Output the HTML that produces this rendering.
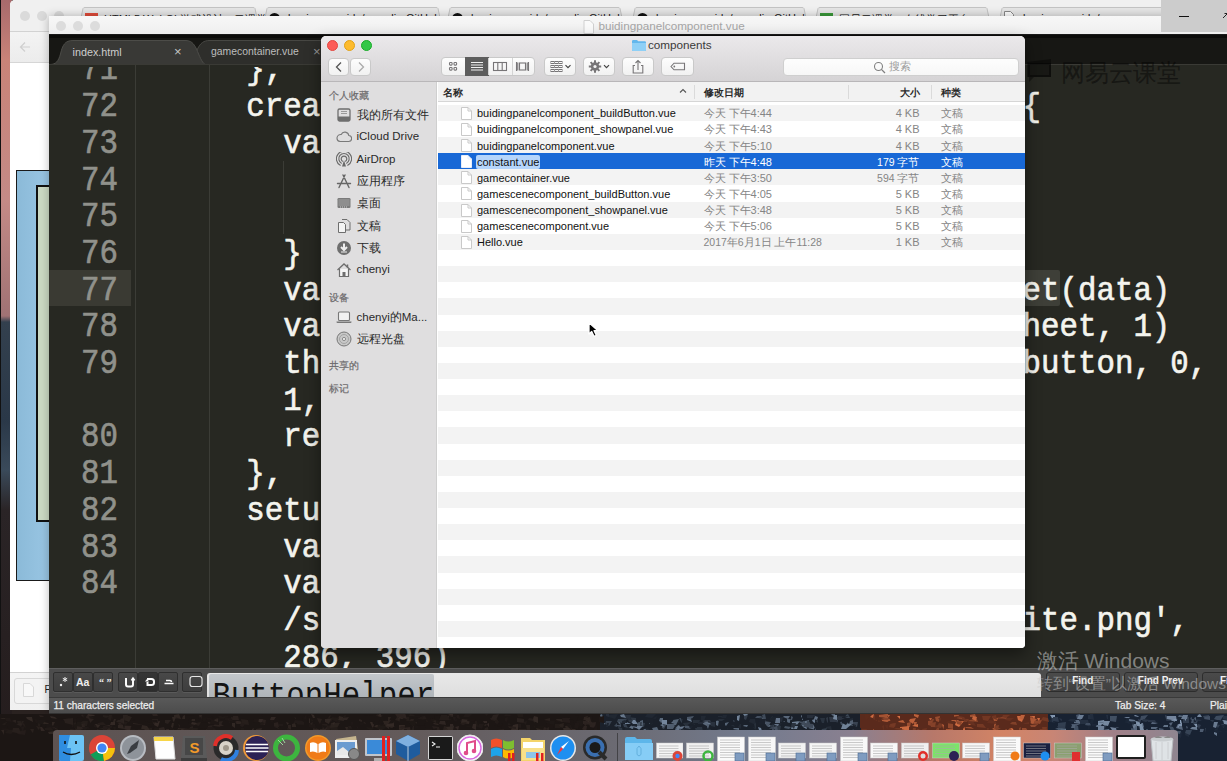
<!DOCTYPE html>
<html><head><meta charset="utf-8">
<style>
*{box-sizing:border-box}
html,body{margin:0;padding:0;width:1227px;height:761px;overflow:hidden;background:#2a2220;font-family:"Liberation Sans",sans-serif}
.a{position:absolute}
.mono{font-family:"Liberation Mono",monospace;white-space:pre}
/* desktop */
#desk-left{left:0;top:0;width:12px;height:761px;background:linear-gradient(90deg,#111 0,#111 1px,transparent 1px),linear-gradient(#a86a6c 0px,#c98378 60px,#c48a86 200px,#a07274 316px,#33404e 322px,#2a3848 420px,#3a4a5a 470px,#2a2426 510px,#241c1c 761px)}
#desk-bot{left:0;top:709px;width:1227px;height:52px;background:linear-gradient(90deg,#2a201c 0,#2e2420 400px,#3a3a48 600px,#505870 800px,#b0583a 900px,#c06040 1020px,#405070 1080px,#2a3a50 1227px)}
/* browser */
#browser{left:10px;top:0;width:1217px;height:710px;background:#fff;border-radius:5px 0 0 0;overflow:hidden}
#br-top{left:0;top:0;width:1217px;height:31.5px;background:#f0f0f0;border-bottom:1px solid #d2d2d2}
#br-tool{left:0;top:31.5px;width:1217px;height:31.5px;background:linear-gradient(#f3f3f3,#ececec);border-bottom:1px solid #d6d6d6}
/* sublime */
#subl{left:49px;top:16px;width:1178px;height:698px;background:#272822;overflow:hidden;box-shadow:0 0 9px rgba(0,0,0,.28)}
#subl-title{left:0;top:0;width:1178px;height:19px;background:linear-gradient(#f7f7f7,#efefef);border-bottom:1px solid #1a1a1a}
#subl-tabs{left:0;top:19px;width:1178px;height:29px;background:#171714}
.ln{-webkit-text-stroke:0.6px #90918b;color:#90918b;font-size:30.8px;line-height:36.7px;transform:scaleY(1.13);transform-origin:50% 50%}
.code{-webkit-text-stroke:0.6px #f4f4ee;color:#f4f4ee;font-size:30.8px;line-height:36.7px;transform:scaleY(1.05);transform-origin:50% 50%}
/* finder */
#finder{left:321px;top:36px;width:704px;height:612px;border-radius:5px 5px 4px 4px;overflow:hidden;background:#fff;box-shadow:0 6px 16px rgba(0,0,0,.45)}
#f-tool{left:0;top:0;width:704px;height:46px;background:linear-gradient(#ebe9eb,#d5d3d5);border-bottom:1px solid #b9b7b9}
#f-side{left:0;top:46px;width:116px;height:566px;background:#dfdedf;border-right:1px solid #cfcfcf}
.tl{width:11px;height:11px;border-radius:50%}
.fbtn{background:linear-gradient(#fdfdfd,#f1f1f1);border:1px solid #c9c9c9;border-radius:4px}
.side-h{font-size:10px;color:#6c6a6c;-webkit-text-stroke:.2px #6c6a6c}
.side-i{font-size:11.5px;color:#2a2a2a}
.row{left:117px;width:587px;height:16.2px}
.fname{font-size:11px;line-height:13px;color:#1a1a1a;white-space:pre}
.fdate{font-size:11px;line-height:13px;color:#858585;white-space:pre}
/* dock */
#dock{left:53px;top:730px;width:1125px;height:31px;background:rgba(120,110,110,.75);border-radius:4px 4px 0 0}
.di{top:734px;width:27px;height:27px;border-radius:5px}
</style></head><body>
<div id="desk-left" class="a"></div>

<!-- BROWSER -->
<div id="browser" class="a">
  <div id="br-top" class="a"></div>
  <svg class="a" style="left:68px;top:7px" width="182" height="25" viewBox="0 0 182 25"><path d="M0 25L5 1.5Q5.5 .5 7 .5H175Q176.5 .5 177 1.5L182 25" fill="#e6e6e6" stroke="#c4c4c4" stroke-width="1"/></svg>
  <div class="a" style="left:75px;top:13px;width:13px;height:10px;background:#e04b3a"></div>
  <div class="a" style="left:94px;top:11.5px;font-size:11px;color:#222;white-space:pre">HTML5 WebGL游戏设计 - 云课堂</div>
  <svg class="a" style="left:252px;top:7px" width="181" height="25" viewBox="0 0 181 25"><path d="M0 25L5 1.5Q5.5 .5 7 .5H174Q175.5 .5 176 1.5L181 25" fill="#e6e6e6" stroke="#c4c4c4" stroke-width="1"/></svg>
  <div class="a" style="left:259px;top:13px;width:11px;height:11px;border-radius:50%;background:#111"></div>
  <div class="a" style="left:278px;top:11.5px;font-size:11px;color:#222;white-space:pre">beginner-guide/vue-cli - GitHub</div>
  <svg class="a" style="left:435px;top:7px" width="180" height="25" viewBox="0 0 180 25"><path d="M0 25L5 1.5Q5.5 .5 7 .5H173Q174.5 .5 175 1.5L180 25" fill="#e6e6e6" stroke="#c4c4c4" stroke-width="1"/></svg>
  <div class="a" style="left:442px;top:13px;width:11px;height:11px;border-radius:50%;background:#111"></div>
  <div class="a" style="left:461px;top:11.5px;font-size:11px;color:#222;white-space:pre">beginner-guide/vue-cli - GitHub</div>
  <svg class="a" style="left:620px;top:7px" width="179" height="25" viewBox="0 0 179 25"><path d="M0 25L5 1.5Q5.5 .5 7 .5H172Q173.5 .5 174 1.5L179 25" fill="#e6e6e6" stroke="#c4c4c4" stroke-width="1"/></svg>
  <div class="a" style="left:627px;top:13px;width:11px;height:11px;border-radius:50%;background:#111"></div>
  <div class="a" style="left:646px;top:11.5px;font-size:11px;color:#222;white-space:pre">beginner-guide/vue-cli - GitHub</div>
  <svg class="a" style="left:803px;top:7px" width="179" height="25" viewBox="0 0 179 25"><path d="M0 25L5 1.5Q5.5 .5 7 .5H172Q173.5 .5 174 1.5L179 25" fill="#e6e6e6" stroke="#c4c4c4" stroke-width="1"/></svg>
  <div class="a" style="left:810px;top:13px;width:13px;height:10px;background:#3a9a3a"></div>
  <div class="a" style="left:829px;top:11.5px;font-size:11px;color:#222;white-space:pre">网易云课堂 - 在线学习平台</div>
  <svg class="a" style="left:987px;top:7px" width="180" height="25" viewBox="0 0 180 25"><path d="M0 25L5 1.5Q5.5 .5 7 .5H173Q174.5 .5 175 1.5L180 25" fill="#e6e6e6" stroke="#c4c4c4" stroke-width="1"/></svg>
  <svg class="a" style="left:994px;top:11px" width="10" height="12"><path d="M.5 .5h6l3 3v8h-9z" fill="#fff" stroke="#888"/></svg>
  <div class="a" style="left:1013px;top:11.5px;font-size:11px;color:#222;white-space:pre">beginner-guide/vue</div>
  <div class="a tl" style="left:10px;top:11px;width:10px;height:10px;background:#dadada"></div>
  <div class="a tl" style="left:27px;top:11px;width:10px;height:10px;background:#dadada"></div>
  <div class="a tl" style="left:44px;top:11px;width:10px;height:10px;background:#dadada"></div>
  <div id="br-tool" class="a"></div>
  <svg class="a" style="left:8px;top:40px" width="40" height="14" viewBox="0 0 40 14"><path d="M12 7H3M7 2.5L2.5 7L7 11.5" fill="none" stroke="#cfcfcf" stroke-width="1.2"/><path d="M33 7h9" stroke="#d6d6d6" stroke-width="1.2"/></svg>
  <div class="a" style="left:6px;top:170px;width:40px;height:411px;background:linear-gradient(90deg,#8bbad8,#9cc8e6);border:1px solid #1a1a1a"></div>
  <div class="a" style="left:26px;top:185px;width:20px;height:337px;background:#cbd9c3;border:2px solid #111"></div>
  <div class="a" style="left:0;top:672px;width:1217px;height:38px;background:linear-gradient(#f4f4f4,#f0f0f0);border-top:1.5px solid #d2d2d2"></div>
  <div class="a" style="left:4px;top:677.5px;width:200px;height:26px;border:1px solid #d8d8d8;border-radius:3px;background:#f3f3f3"></div>
  <svg class="a" style="left:13px;top:683px" width="11" height="14" viewBox="0 0 11 14"><path d="M.5 .5h6.5l3.5 3.5v9.5h-10z" fill="#f8f8f8" stroke="#d8d8d8"/></svg>
  <div class="a" style="left:34.5px;top:684px;font-size:10px;color:#222">F</div>
</div>

<!-- SUBLIME -->
<div id="subl" class="a">
  <div id="subl-title" class="a">
    <div class="a tl" style="left:7px;top:5px;width:10px;height:10px;background:#dcdcdc"></div>
    <div class="a tl" style="left:24px;top:5px;width:10px;height:10px;background:#dcdcdc"></div>
    <div class="a tl" style="left:41px;top:5px;width:10px;height:10px;background:#dcdcdc"></div>
    <svg class="a" style="left:534px;top:3.5px" width="11" height="14" viewBox="0 0 11 14"><path d="M1 .5h6l3.5 3.5v9.5h-9.5z" fill="#fafafa" stroke="#d0d0d0"/></svg>
    <div class="a" style="left:549.5px;top:3.2px;font-size:11.7px;color:#a6a6a6;white-space:pre">buidingpanelcomponent.vue</div>
  </div>
  <div id="subl-tabs" class="a">
    <div class="a" style="left:0;top:0;width:1178px;height:2.5px;background:#0c0c0a"></div>
    <svg class="a" style="left:0;top:0" width="300" height="30" viewBox="0 0 300 30">
      <path d="M139 29.5C142.5 27 145.5 21 148.5 14C151.5 8 154.5 5.5 161 5.5L300 5.5L300 29.5Z" fill="#2e2e2b" stroke="#474743" stroke-width="1"/>
      <path d="M1 29.5C7 29.5 9.5 26 11.5 19C13.5 10 16 5.5 24 5.5L136 5.5C142 5.5 144.5 8 147.5 14C150.5 21 152.5 27 156 29.5Z" fill="#393936" stroke="#4c4c48" stroke-width="1"/>
    </svg>
    <div class="a" style="left:23.5px;top:10.5px;font-size:10.8px;color:#cdcdcd;white-space:pre">index.html</div>
    <div class="a" style="left:125px;top:8.5px;font-size:13px;color:#c4c4c4">&#215;</div>
    <div class="a" style="left:162px;top:10.5px;font-size:10.4px;color:#bdbdbd;white-space:pre">gamecontainer.vue</div>
    <div class="a" style="left:264px;top:8.5px;font-size:13px;color:#9a9a9a">&#215;</div>
  </div>
  <div class="a" style="left:0;top:48px;width:1178px;height:1px;background:#3a3a35"></div>
  <div class="a" style="left:0;top:253.8px;width:82px;height:36.7px;background:#3a3a33"></div>
  <div class="a" style="left:86px;top:49px;width:1px;height:603px;background:#3b3c36"></div>
  <div class="a" style="left:160px;top:49px;width:1px;height:603px;background:#3b3c36"></div>
  <div class="a" style="left:234px;top:145px;width:1px;height:73px;background:#3b3c36"></div>
  <div class="a" style="left:973.5px;top:253.8px;width:37px;height:36.7px;background:#3e3f38;border-radius:2px"></div>
<div class="a" style="left:0;top:50.5px;width:1178px;height:601.5px;overflow:hidden"><div class="a" style="left:0;top:-50.5px;width:1178px;height:652px">
<div class="a mono ln" style="left:32px;top:36.3px">71</div>
<div class="a mono ln" style="left:32px;top:73.0px">72</div>
<div class="a mono ln" style="left:32px;top:109.8px">73</div>
<div class="a mono ln" style="left:32px;top:146.5px">74</div>
<div class="a mono ln" style="left:32px;top:183.2px">75</div>
<div class="a mono ln" style="left:32px;top:219.9px">76</div>
<div class="a mono ln" style="left:32px;top:256.5px">77</div>
<div class="a mono ln" style="left:32px;top:293.3px">78</div>
<div class="a mono ln" style="left:32px;top:329.9px">79</div>
<div class="a mono ln" style="left:32px;top:403.3px">80</div>
<div class="a mono ln" style="left:32px;top:440.0px">81</div>
<div class="a mono ln" style="left:32px;top:476.8px">82</div>
<div class="a mono ln" style="left:32px;top:513.5px">83</div>
<div class="a mono ln" style="left:32px;top:550.2px">84</div>
<div class="a mono code" style="left:197.3px;top:37.3px">},</div>
<div class="a mono code" style="left:197.3px;top:74.0px">created: function</div>
<div class="a mono code" style="left:234.3px;top:110.8px">var this_ = th</div>
<div class="a mono code" style="left:234.3px;top:220.9px">}</div>
<div class="a mono code" style="left:234.3px;top:257.5px">var sheet = fr</div>
<div class="a mono code" style="left:234.3px;top:294.3px">var wid = she</div>
<div class="a mono code" style="left:234.3px;top:330.9px">this.button =</div>
<div class="a mono code" style="left:234.3px;top:367.6px">1, ta</div>
<div class="a mono code" style="left:234.3px;top:404.3px">return this</div>
<div class="a mono code" style="left:197.3px;top:441.0px">},</div>
<div class="a mono code" style="left:197.3px;top:477.8px">setup: func</div>
<div class="a mono code" style="left:234.3px;top:514.5px">var this_ =</div>
<div class="a mono code" style="left:234.3px;top:551.2px">var data =</div>
<div class="a mono code" style="left:234.3px;top:587.9px">/static/sp</div>
<div class="a mono code" style="left:234.3px;top:624.6px">286, 396)</div>
<div class="a mono code" style="left:973.5px;top:74.0px">{</div>
<div class="a mono code" style="left:973.5px;top:257.5px">et(data)</div>
<div class="a mono code" style="left:973.5px;top:294.3px">heet, 1)</div>
<div class="a mono code" style="left:973.5px;top:330.9px">button, 0,</div>
<div class="a mono code" style="left:973.5px;top:587.9px">ite.png',</div>
</div></div>
  <!-- find panel -->
<div class="a" style="left:0;top:651.5px;width:1178px;height:29.5px;background:#4c4c4c;border-top:1px solid #5e5e5e">
<div class="a" style="left:4px;top:3.5px;width:20px;height:19.5px;background:linear-gradient(#484848,#3e3e3e);border:1px solid #2f2f2f;border-radius:2px;box-shadow:0 1px 0 #5a5a5a"></div>
<div class="a" style="left:24px;top:3.5px;width:20px;height:19.5px;background:linear-gradient(#484848,#3e3e3e);border:1px solid #2f2f2f;border-radius:2px;box-shadow:0 1px 0 #5a5a5a"></div>
<div class="a" style="left:44px;top:3.5px;width:20px;height:19.5px;background:linear-gradient(#484848,#3e3e3e);border:1px solid #2f2f2f;border-radius:2px;box-shadow:0 1px 0 #5a5a5a"></div>
<div class="a" style="left:69px;top:3.5px;width:20px;height:19.5px;background:linear-gradient(#484848,#3e3e3e);border:1px solid #2f2f2f;border-radius:2px;box-shadow:0 1px 0 #5a5a5a"></div>
<div class="a" style="left:89px;top:3.5px;width:20px;height:19.5px;background:linear-gradient(#353535,#2c2c2c);border:1px solid #2f2f2f;border-radius:2px;box-shadow:0 1px 0 #5a5a5a"></div>
<div class="a" style="left:109px;top:3.5px;width:20px;height:19.5px;background:linear-gradient(#484848,#3e3e3e);border:1px solid #2f2f2f;border-radius:2px;box-shadow:0 1px 0 #5a5a5a"></div>
<div class="a" style="left:133px;top:3.5px;width:20px;height:19.5px;background:linear-gradient(#484848,#3e3e3e);border:1px solid #2f2f2f;border-radius:2px;box-shadow:0 1px 0 #5a5a5a"></div>

<svg class="a" style="left:4px;top:3.5px" width="150" height="19" viewBox="0 0 150 19">
<circle cx="8" cy="13" r="1.2" fill="#eee"/><path d="M12 5v5M9.8 6.3l4.4 2.4M14.2 6.3l-4.4 2.4" stroke="#eee" stroke-width="1"/>
<text x="23" y="14" font-family="Liberation Sans" font-size="10.5" font-weight="bold" fill="#eee">Aa</text>
<text x="46" y="14" font-family="Liberation Serif" font-size="10" font-weight="bold" fill="#eee">“ ”</text>
<path d="M73 6v6.5q0 2 2 2h3q2 0 2-2V7.5M78.5 8.5l1.5-2l1.5 2" fill="none" stroke="#fafafa" stroke-width="2"/>
<path d="M94 7h4.5q2.5 0 2.5 2.5v1q0 2.5-2.5 2.5h-4v-3" fill="none" stroke="#fafafa" stroke-width="2"/><path d="M92 9.5l2-2.5l2 2.5z" fill="#fafafa"/>
<path d="M113 8.5h4q1.5 0 1.5 1.5v0M111.5 11.5h9" fill="none" stroke="#fafafa" stroke-width="1.6"/>
<rect x="137" y="4.5" width="12" height="10" rx="2.5" fill="none" stroke="#e6e6e6" stroke-width="1.2"/>
</svg>
<div class="a" style="left:158.4px;top:4px;width:834px;height:25px;background:linear-gradient(#e8e8e8,#dedede);border-radius:3px 3px 0 0;overflow:hidden"><div class="a" style="left:2px;top:1.5px;width:225px;height:30px;background:linear-gradient(#c3c7cb,#a9afb4);border-radius:2px"></div><div class="a mono" style="left:5px;top:4px;font-size:30.8px;line-height:36.7px;color:#141414;transform:scaleY(1.12);transform-origin:0 0">ButtonHelper</div></div>
<div class="a" style="left:997px;top:3.5px;width:73.5px;height:19.5px;background:linear-gradient(#4a4a4a,#404040);border:1px solid #2d2d2d;border-radius:3px"></div>
<div class="a" style="left:1074.6px;top:3.5px;width:74px;height:19.5px;background:linear-gradient(#4a4a4a,#404040);border:1px solid #2d2d2d;border-radius:3px"></div>
<div class="a" style="left:1152.6px;top:3.5px;width:74px;height:19.5px;background:linear-gradient(#4a4a4a,#404040);border:1px solid #2d2d2d;border-radius:3px"></div>
<div class="a" style="left:997px;top:6.5px;width:73.5px;text-align:center;font-size:10px;font-weight:bold;color:#f2f2f2">Find</div>
<div class="a" style="left:1074.6px;top:6.5px;width:74px;text-align:center;font-size:10px;font-weight:bold;color:#f2f2f2">Find Prev</div>
<div class="a" style="left:1171px;top:6.5px;font-size:10px;font-weight:bold;color:#f2f2f2;white-space:nowrap">Find All</div>
</div>
<div class="a" style="left:0;top:681px;width:1178px;height:16.5px;background:linear-gradient(#595959,#4c4c4c);border-top:1px solid #3a3a3a;border-bottom:1px solid #333"></div>
<div class="a" style="left:4.4px;top:683.5px;font-size:10.1px;color:#ededed;white-space:pre;-webkit-text-stroke:.25px #ededed">11 characters selected</div>
<div class="a" style="left:1066px;top:683.5px;font-size:10.2px;color:#ededed;white-space:pre;-webkit-text-stroke:.25px #ededed">Tab Size: 4</div>
<div class="a" style="left:1161px;top:683.5px;font-size:10.2px;color:#ededed;white-space:pre;-webkit-text-stroke:.25px #ededed">Plain</div>
</div>

<!-- TOPRIGHT -->
<div class="a" style="left:1161px;top:0;width:66px;height:32px;background:#cccccc"></div>
<div class="a" style="left:1179px;top:15.5px;width:10px;height:1.5px;background:#111"></div>
<svg class="a" style="left:1222px;top:11px" width="6" height="8" viewBox="0 0 6 8"><path d="M1 7L5 3M2.5 2.5H5.5V5.5" fill="none" stroke="#222" stroke-width="1"/></svg>

<!-- FINDER -->
<div id="finder" class="a">
  <div id="f-tool" class="a">
    <div class="a tl" style="left:6px;top:4px;background:#fc5b57;border:.5px solid #e2463f"></div>
    <div class="a tl" style="left:23px;top:4px;background:#fdbb2d;border:.5px solid #e1a116"></div>
    <div class="a tl" style="left:40px;top:4px;background:#33c748;border:.5px solid #1aab29"></div>
    <svg class="a" style="left:311px;top:4px" width="14" height="11" viewBox="0 0 14 11"><path d="M0 1.2Q0 0 1.2 0h3.8l1.2 1.3h6.6Q14 1.3 14 2.5V10Q14 11 13 11H1Q0 11 0 10z" fill="#63b7ec"/><path d="M0 3h14v7Q14 11 13 11H1Q0 11 0 10z" fill="#8fd0f6"/></svg>
    <div class="a" style="left:327px;top:1.5px;font-size:11.7px;color:#3a3a3a;white-space:pre">components</div>
    <div class="a fbtn" style="left:7px;top:21.5px;width:21px;height:18.5px"></div>
    <div class="a fbtn" style="left:29px;top:21.5px;width:21px;height:18.5px"></div>
    <svg class="a" style="left:13px;top:25px" width="10" height="12" viewBox="0 0 10 12"><path d="M7 1.5L2.5 6L7 10.5" fill="none" stroke="#555" stroke-width="1.3"/></svg>
    <svg class="a" style="left:35px;top:25px" width="10" height="12" viewBox="0 0 10 12"><path d="M3 1.5L7.5 6L3 10.5" fill="none" stroke="#aaa" stroke-width="1.3"/></svg>
    <div class="a fbtn" style="left:120px;top:21px;width:94px;height:19px"></div>
    <div class="a" style="left:144px;top:21px;width:24px;height:19px;background:#5d5d5d"></div>
    <div class="a" style="left:167px;top:22px;width:1px;height:17px;background:#d4d4d4"></div>
    <div class="a" style="left:190.5px;top:22px;width:1px;height:17px;background:#d4d4d4"></div>
    <svg class="a" style="left:120px;top:21px" width="94" height="19" viewBox="0 0 94 19">
      <g fill="none" stroke="#777577" stroke-width="1.1"><rect x="8.5" y="5.5" width="2.6" height="2.6" rx=".8"/><rect x="13" y="5.5" width="2.6" height="2.6" rx=".8"/><rect x="8.5" y="10.5" width="2.6" height="2.6" rx=".8"/><rect x="13" y="10.5" width="2.6" height="2.6" rx=".8"/></g>
      <g stroke="#f0f0f0" stroke-width="1.2"><path d="M30 5.5h12M30 8h12M30 10.5h12M30 13h12"/></g>
      <g fill="none" stroke="#777577" stroke-width="1.1"><rect x="52.5" y="5.5" width="13" height="8"/><path d="M56.8 5.5v8M61.2 5.5v8"/></g>
      <g fill="none" stroke="#777577" stroke-width="1.1"><rect x="78.5" y="6" width="6" height="7"/><path d="M75.5 5v9M76.8 5.5v8M87.5 5v9M86.2 5.5v8"/></g>
    </svg>
    <div class="a fbtn" style="left:222.5px;top:21px;width:32.5px;height:19px"></div>
    <svg class="a" style="left:222.5px;top:21px" width="33" height="19" viewBox="0 0 33 19"><g fill="none" stroke="#777577" stroke-width="1"><rect x="7" y="4.5" width="3" height="2"/><rect x="11" y="4.5" width="3" height="2"/><rect x="15" y="4.5" width="3" height="2"/><rect x="7" y="8.5" width="3" height="2"/><rect x="11" y="8.5" width="3" height="2"/><rect x="15" y="8.5" width="3" height="2"/><rect x="7" y="12.5" width="3" height="2"/><rect x="11" y="12.5" width="3" height="2"/><rect x="15" y="12.5" width="3" height="2"/></g><path d="M21.5 8.2l2.5 2.5l2.5-2.5" fill="none" stroke="#444" stroke-width="1.2"/></svg>
    <div class="a fbtn" style="left:262px;top:21px;width:32px;height:19px"></div>
    <svg class="a" style="left:262px;top:21px" width="32" height="19" viewBox="0 0 32 19"><g transform="translate(12,9.5)"><circle r="4.2" fill="#777577"/><g stroke="#777577" stroke-width="2"><path d="M0-6.2v12.4M-6.2 0h12.4M-4.4-4.4l8.8 8.8M4.4-4.4l-8.8 8.8"/></g><circle r="1.6" fill="#f3f3f3"/></g><path d="M21 8.2l2.5 2.5l2.5-2.5" fill="none" stroke="#444" stroke-width="1.2"/></svg>
    <div class="a fbtn" style="left:301px;top:21px;width:32px;height:19px"></div>
    <svg class="a" style="left:301px;top:21px" width="32" height="19" viewBox="0 0 32 19"><g fill="none" stroke="#777577" stroke-width="1.1"><path d="M13 8.5h-1.8v7.5h9.6v-7.5H19"/><path d="M16 13V3.5M13.5 6l2.5-2.5l2.5 2.5"/></g></svg>
    <div class="a fbtn" style="left:340px;top:21px;width:32.5px;height:19px"></div>
    <svg class="a" style="left:340px;top:21px" width="33" height="19" viewBox="0 0 33 19"><path d="M10 9.5l3-3.3h10.5v6.6H13z" fill="none" stroke="#777577" stroke-width="1.1"/><circle cx="13.3" cy="9.5" r=".9" fill="#777577"/></svg>
    <div class="a" style="left:462px;top:21.5px;width:235.5px;height:18.5px;background:linear-gradient(#fdfdfd,#f7f7f7);border:1px solid #cfcfcf;border-radius:4px"></div>
    <svg class="a" style="left:552px;top:24.5px" width="13" height="13" viewBox="0 0 13 13"><circle cx="5.5" cy="5.5" r="4" fill="none" stroke="#808080" stroke-width="1.1"/><path d="M8.4 8.4L12 12" stroke="#808080" stroke-width="1.3"/></svg>
    <div class="a" style="left:568px;top:24px;font-size:10.8px;color:#9c9c9c;white-space:pre">搜索</div>
  </div>
  <div id="f-side" class="a">
    <div class="a side-h" style="left:7.5px;top:7px">个人收藏</div>
    <svg class="a" style="left:15px;top:25.0px" width="16" height="16" viewBox="0 0 16 16"><rect x="2" y="2" width="12" height="12" rx="1.5" fill="none" stroke="#6e6e6e" stroke-width="1.3"/><path d="M2 9.5h12v3.5q0 1-1 1H3q-1 0-1-1z" fill="#6e6e6e"/><path d="M5 4.5h6M5 6.5h6" stroke="#9a9a9a"/></svg>
<div class="a side-i" style="left:35.5px;top:26.0px">我的所有文件</div>
<svg class="a" style="left:15px;top:47.0px" width="16" height="16" viewBox="0 0 16 16"><path d="M4 12.5h8.5a3 3 0 0 0 .3-6a4 4 0 0 0-7.6-1a3.5 3.5 0 0 0-1.2 7z" fill="none" stroke="#7a7a7a" stroke-width="1.1"/></svg>
<div class="a side-i" style="left:35.5px;top:48.0px">iCloud Drive</div>
<svg class="a" style="left:15px;top:69.6px" width="16" height="16" viewBox="0 0 16 16"><g fill="none" stroke="#6a6a6a" stroke-width="1.15"><path d="M4.6 13.6A7.6 7.6 0 1 1 11.4 13.6"/><path d="M5.7 11.4A5.2 5.2 0 1 1 10.3 11.4"/><path d="M6.8 9.4A2.8 2.8 0 1 1 9.2 9.4"/></g><path d="M8 8.2L10 14.5H6z" fill="#6a6a6a"/></svg>
<div class="a side-i" style="left:35.5px;top:70.6px">AirDrop</div>
<svg class="a" style="left:15px;top:91.3px" width="16" height="16" viewBox="0 0 16 16"><g stroke="#666" stroke-width="1.4" fill="none" stroke-linecap="round"><path d="M9 2L3 14.5M7 2l6 12.5M1.5 10.5h13"/></g></svg>
<div class="a side-i" style="left:35.5px;top:92.3px">应用程序</div>
<svg class="a" style="left:15px;top:113.3px" width="16" height="16" viewBox="0 0 16 16"><rect x="1.5" y="3" width="13" height="10" rx="1.3" fill="#7a7a7a"/><rect x="2.5" y="4" width="11" height="7" fill="#8e8e8e"/><path d="M4 12h8" stroke="#ccc" stroke-dasharray="1 1"/></svg>
<div class="a side-i" style="left:35.5px;top:114.3px">桌面</div>
<svg class="a" style="left:15px;top:136.0px" width="16" height="16" viewBox="0 0 16 16"><path d="M2.5 4.5h5l2 2v8h-7z" fill="#f4f4f4" stroke="#6e6e6e"/><path d="M6 1.5h5l3 3v7.5h-4.5" fill="none" stroke="#6e6e6e"/></svg>
<div class="a side-i" style="left:35.5px;top:137.0px">文稿</div>
<svg class="a" style="left:15px;top:158.0px" width="16" height="16" viewBox="0 0 16 16"><circle cx="8" cy="8" r="7" fill="#6e6e6e"/><path d="M8 3.5v6M5 7l3 3l3-3" fill="none" stroke="#eee" stroke-width="2"/><path d="M5 12h6" stroke="#eee" stroke-width="1.2"/></svg>
<div class="a side-i" style="left:35.5px;top:159.0px">下载</div>
<svg class="a" style="left:15px;top:180.0px" width="16" height="16" viewBox="0 0 16 16"><path d="M1.5 8L8 2l6.5 6" fill="none" stroke="#6e6e6e" stroke-width="1.3"/><path d="M3.5 7v7.5h9V7" fill="#f5f5f5" stroke="#6e6e6e" stroke-width="1.2"/><rect x="6.5" y="10" width="3" height="4.5" fill="#6e6e6e"/><path d="M11.5 2.5v3" stroke="#6e6e6e" stroke-width="1.5"/></svg>
<div class="a side-i" style="left:35.5px;top:181.0px">chenyi</div>
<svg class="a" style="left:15px;top:226.5px" width="16" height="16" viewBox="0 0 16 16"><rect x="2.5" y="3" width="11" height="8.5" rx="1" fill="#f1f1f1" stroke="#777" stroke-width="1.1"/><path d="M0.5 12.5h15v.5q0 1-1 1h-13q-1 0-1-1z" fill="#777"/></svg>
<div class="a side-i" style="left:35.5px;top:227.5px">chenyi的Ma...</div>
<svg class="a" style="left:15px;top:248.6px" width="16" height="16" viewBox="0 0 16 16"><circle cx="8" cy="8" r="7" fill="#c8c8c8" stroke="#777" stroke-width="1"/><circle cx="8" cy="8" r="4.5" fill="none" stroke="#9a9a9a" stroke-width=".8"/><circle cx="8" cy="8" r="1.6" fill="#eee" stroke="#777" stroke-width=".8"/></svg>
<div class="a side-i" style="left:35.5px;top:249.6px">远程光盘</div>
<div class="a side-h" style="left:7.5px;top:208.5px">设备</div>
<div class="a side-h" style="left:7.5px;top:276.5px">共享的</div>
<div class="a side-h" style="left:7.5px;top:300px">标记</div>
  </div>
  <div class="a" style="left:117px;top:46px;width:587px;height:20px;background:#f2f2f2;border-bottom:1px solid #d6d6d6"></div>
  <div class="a" style="left:122px;top:50px;font-size:10px;color:#2a2a2a;font-weight:bold">名称</div>
  <svg class="a" style="left:358px;top:52px" width="8" height="6" viewBox="0 0 8 6"><path d="M1 4.5l3-3l3 3" fill="none" stroke="#555" stroke-width="1.1"/></svg>
  <div class="a" style="left:372.5px;top:49px;width:1px;height:14px;background:#dadada"></div>
  <div class="a" style="left:382.5px;top:50px;font-size:10px;color:#2a2a2a;font-weight:bold">修改日期</div>
  <div class="a" style="left:527px;top:49px;width:1px;height:14px;background:#dadada"></div>
  <div class="a" style="left:560px;width:38.5px;text-align:right;top:50px;font-size:10px;color:#2a2a2a;font-weight:bold">大小</div>
  <div class="a" style="left:609.8px;top:49px;width:1px;height:14px;background:#dadada"></div>
  <div class="a" style="left:619.6px;top:50px;font-size:10px;color:#2a2a2a;font-weight:bold">种类</div>
<div class="a" style="left:117px;top:68.8px;width:587px;height:16.4px;background:#f3f3f3"></div>
<div class="a" style="left:117px;top:84.9px;width:587px;height:16.4px;background:#ffffff"></div>
<div class="a" style="left:117px;top:101.1px;width:587px;height:16.4px;background:#f3f3f3"></div>
<div class="a" style="left:117px;top:117.2px;width:587px;height:16.4px;background:#1868d6"></div>
<div class="a" style="left:117px;top:133.3px;width:587px;height:16.4px;background:#f3f3f3"></div>
<div class="a" style="left:117px;top:149.4px;width:587px;height:16.4px;background:#ffffff"></div>
<div class="a" style="left:117px;top:165.6px;width:587px;height:16.4px;background:#f3f3f3"></div>
<div class="a" style="left:117px;top:181.7px;width:587px;height:16.4px;background:#ffffff"></div>
<div class="a" style="left:117px;top:197.8px;width:587px;height:16.4px;background:#f3f3f3"></div>
<div class="a" style="left:117px;top:214.0px;width:587px;height:16.4px;background:#ffffff"></div>
<div class="a" style="left:117px;top:230.1px;width:587px;height:16.4px;background:#f3f3f3"></div>
<div class="a" style="left:117px;top:246.2px;width:587px;height:16.4px;background:#ffffff"></div>
<div class="a" style="left:117px;top:262.4px;width:587px;height:16.4px;background:#f3f3f3"></div>
<div class="a" style="left:117px;top:278.5px;width:587px;height:16.4px;background:#ffffff"></div>
<div class="a" style="left:117px;top:294.6px;width:587px;height:16.4px;background:#f3f3f3"></div>
<div class="a" style="left:117px;top:310.8px;width:587px;height:16.4px;background:#ffffff"></div>
<div class="a" style="left:117px;top:326.9px;width:587px;height:16.4px;background:#f3f3f3"></div>
<div class="a" style="left:117px;top:343.0px;width:587px;height:16.4px;background:#ffffff"></div>
<div class="a" style="left:117px;top:359.1px;width:587px;height:16.4px;background:#f3f3f3"></div>
<div class="a" style="left:117px;top:375.3px;width:587px;height:16.4px;background:#ffffff"></div>
<div class="a" style="left:117px;top:391.4px;width:587px;height:16.4px;background:#f3f3f3"></div>
<div class="a" style="left:117px;top:407.5px;width:587px;height:16.4px;background:#ffffff"></div>
<div class="a" style="left:117px;top:423.7px;width:587px;height:16.4px;background:#f3f3f3"></div>
<div class="a" style="left:117px;top:439.8px;width:587px;height:16.4px;background:#ffffff"></div>
<div class="a" style="left:117px;top:455.9px;width:587px;height:16.4px;background:#f3f3f3"></div>
<div class="a" style="left:117px;top:472.1px;width:587px;height:16.4px;background:#ffffff"></div>
<div class="a" style="left:117px;top:488.2px;width:587px;height:16.4px;background:#f3f3f3"></div>
<div class="a" style="left:117px;top:504.3px;width:587px;height:16.4px;background:#ffffff"></div>
<div class="a" style="left:117px;top:520.4px;width:587px;height:16.4px;background:#f3f3f3"></div>
<div class="a" style="left:117px;top:536.6px;width:587px;height:16.4px;background:#ffffff"></div>
<div class="a" style="left:117px;top:552.7px;width:587px;height:16.4px;background:#f3f3f3"></div>
<div class="a" style="left:117px;top:568.8px;width:587px;height:16.4px;background:#ffffff"></div>
<div class="a" style="left:117px;top:585.0px;width:587px;height:16.4px;background:#f3f3f3"></div>
<div class="a" style="left:117px;top:601.1px;width:587px;height:16.4px;background:#ffffff"></div>
<svg class="a" style="left:140px;top:70.8px" width="11" height="13" viewBox="0 0 11 13"><path d="M.5 .5h6.5l3.5 3.5v8.5h-10z" fill="#ffffff" stroke="#c9c9c9" stroke-width="1"/><path d="M7 .5v3.5h3.5" fill="none" stroke="#c9c9c9"/></svg>
<div class="a fname" style="left:156px;top:71.2px;color:#111">buidingpanelcomponent_buildButton.vue</div>
<div class="a fdate" style="left:382.5px;top:71.2px;color:#858585;font-size:11px">今天 下午4:44</div>
<div class="a fdate" style="left:420px;width:178.5px;text-align:right;top:71.2px;color:#858585;font-size:11px">4 KB</div>
<div class="a fdate" style="left:619.6px;top:71.2px;color:#858585">文稿</div>
<svg class="a" style="left:140px;top:86.9px" width="11" height="13" viewBox="0 0 11 13"><path d="M.5 .5h6.5l3.5 3.5v8.5h-10z" fill="#ffffff" stroke="#c9c9c9" stroke-width="1"/><path d="M7 .5v3.5h3.5" fill="none" stroke="#c9c9c9"/></svg>
<div class="a fname" style="left:156px;top:87.3px;color:#111">buidingpanelcomponent_showpanel.vue</div>
<div class="a fdate" style="left:382.5px;top:87.3px;color:#858585;font-size:11px">今天 下午4:43</div>
<div class="a fdate" style="left:420px;width:178.5px;text-align:right;top:87.3px;color:#858585;font-size:11px">4 KB</div>
<div class="a fdate" style="left:619.6px;top:87.3px;color:#858585">文稿</div>
<svg class="a" style="left:140px;top:103.1px" width="11" height="13" viewBox="0 0 11 13"><path d="M.5 .5h6.5l3.5 3.5v8.5h-10z" fill="#ffffff" stroke="#c9c9c9" stroke-width="1"/><path d="M7 .5v3.5h3.5" fill="none" stroke="#c9c9c9"/></svg>
<div class="a fname" style="left:156px;top:103.5px;color:#111">buidingpanelcomponent.vue</div>
<div class="a fdate" style="left:382.5px;top:103.5px;color:#858585;font-size:11px">今天 下午5:10</div>
<div class="a fdate" style="left:420px;width:178.5px;text-align:right;top:103.5px;color:#858585;font-size:11px">4 KB</div>
<div class="a fdate" style="left:619.6px;top:103.5px;color:#858585">文稿</div>
<svg class="a" style="left:140px;top:119.2px" width="11" height="13" viewBox="0 0 11 13"><path d="M.5 .5h6.5l3.5 3.5v8.5h-10z" fill="#ffffff" stroke="#e8eefa" stroke-width="1"/><path d="M7 .5v3.5h3.5" fill="none" stroke="#e8eefa"/></svg>
<div class="a" style="left:154.6px;top:119.0px;width:64.4px;height:13.6px;background:#b5d5fb;border-radius:2px"></div>
<div class="a fname" style="left:156px;top:119.6px;color:#111">constant.vue</div>
<div class="a fdate" style="left:382.5px;top:119.6px;color:#ffffff;font-size:11px">昨天 下午4:48</div>
<div class="a fdate" style="left:420px;width:178.5px;text-align:right;top:119.6px;color:#ffffff;font-size:10.5px">179 字节</div>
<div class="a fdate" style="left:619.6px;top:119.6px;color:#fff">文稿</div>
<svg class="a" style="left:140px;top:135.3px" width="11" height="13" viewBox="0 0 11 13"><path d="M.5 .5h6.5l3.5 3.5v8.5h-10z" fill="#ffffff" stroke="#c9c9c9" stroke-width="1"/><path d="M7 .5v3.5h3.5" fill="none" stroke="#c9c9c9"/></svg>
<div class="a fname" style="left:156px;top:135.7px;color:#111">gamecontainer.vue</div>
<div class="a fdate" style="left:382.5px;top:135.7px;color:#858585;font-size:11px">今天 下午3:50</div>
<div class="a fdate" style="left:420px;width:178.5px;text-align:right;top:135.7px;color:#858585;font-size:10.5px">594 字节</div>
<div class="a fdate" style="left:619.6px;top:135.7px;color:#858585">文稿</div>
<svg class="a" style="left:140px;top:151.4px" width="11" height="13" viewBox="0 0 11 13"><path d="M.5 .5h6.5l3.5 3.5v8.5h-10z" fill="#ffffff" stroke="#c9c9c9" stroke-width="1"/><path d="M7 .5v3.5h3.5" fill="none" stroke="#c9c9c9"/></svg>
<div class="a fname" style="left:156px;top:151.8px;color:#111">gamescenecomponent_buildButton.vue</div>
<div class="a fdate" style="left:382.5px;top:151.8px;color:#858585;font-size:11px">今天 下午4:05</div>
<div class="a fdate" style="left:420px;width:178.5px;text-align:right;top:151.8px;color:#858585;font-size:11px">5 KB</div>
<div class="a fdate" style="left:619.6px;top:151.8px;color:#858585">文稿</div>
<svg class="a" style="left:140px;top:167.6px" width="11" height="13" viewBox="0 0 11 13"><path d="M.5 .5h6.5l3.5 3.5v8.5h-10z" fill="#ffffff" stroke="#c9c9c9" stroke-width="1"/><path d="M7 .5v3.5h3.5" fill="none" stroke="#c9c9c9"/></svg>
<div class="a fname" style="left:156px;top:168.0px;color:#111">gamescenecomponent_showpanel.vue</div>
<div class="a fdate" style="left:382.5px;top:168.0px;color:#858585;font-size:11px">今天 下午3:48</div>
<div class="a fdate" style="left:420px;width:178.5px;text-align:right;top:168.0px;color:#858585;font-size:11px">5 KB</div>
<div class="a fdate" style="left:619.6px;top:168.0px;color:#858585">文稿</div>
<svg class="a" style="left:140px;top:183.7px" width="11" height="13" viewBox="0 0 11 13"><path d="M.5 .5h6.5l3.5 3.5v8.5h-10z" fill="#ffffff" stroke="#c9c9c9" stroke-width="1"/><path d="M7 .5v3.5h3.5" fill="none" stroke="#c9c9c9"/></svg>
<div class="a fname" style="left:156px;top:184.1px;color:#111">gamescenecomponent.vue</div>
<div class="a fdate" style="left:382.5px;top:184.1px;color:#858585;font-size:11px">今天 下午5:06</div>
<div class="a fdate" style="left:420px;width:178.5px;text-align:right;top:184.1px;color:#858585;font-size:11px">5 KB</div>
<div class="a fdate" style="left:619.6px;top:184.1px;color:#858585">文稿</div>
<svg class="a" style="left:140px;top:199.8px" width="11" height="13" viewBox="0 0 11 13"><path d="M.5 .5h6.5l3.5 3.5v8.5h-10z" fill="#ffffff" stroke="#c9c9c9" stroke-width="1"/><path d="M7 .5v3.5h3.5" fill="none" stroke="#c9c9c9"/></svg>
<div class="a fname" style="left:156px;top:200.2px;color:#111">Hello.vue</div>
<div class="a fdate" style="left:382.5px;top:200.2px;color:#858585;font-size:10.5px">2017年6月1日 上午11:28</div>
<div class="a fdate" style="left:420px;width:178.5px;text-align:right;top:200.2px;color:#858585;font-size:11px">1 KB</div>
<div class="a fdate" style="left:619.6px;top:200.2px;color:#858585">文稿</div>
</div>
<!-- FINDER END -->
<!-- CURSOR -->
<svg class="a" style="left:587px;top:321px" width="13" height="17" viewBox="0 0 13 17"><path d="M2 1.8v11.2l2.7-2.5l2.3 4.8l2.3-1l-2.2-4.6h3.9z" fill="#000" stroke="#fff" stroke-width="1.3" stroke-linejoin="round"/></svg>
<!-- WATERMARKS -->
<svg class="a" style="left:1026px;top:57px" width="28" height="28" viewBox="0 0 28 28"><path d="M1 5l24-3v18H8l-5 5v-5H1z" fill="rgba(0,0,0,.38)"/><path d="M3 7h21v12H3z" fill="none" stroke="rgba(0,0,0,.4)" stroke-width="2"/></svg>
<div class="a" style="left:1061px;top:57.5px;font-size:24px;line-height:30px;color:rgba(0,0,0,.42);white-space:pre;-webkit-text-stroke:.15px rgba(0,0,0,.42)">网易云课堂</div>
<div class="a" style="left:1036.5px;top:647.5px;font-size:21px;line-height:26px;color:rgba(200,200,200,.58);white-space:pre">激活 Windows</div>
<div class="a" style="left:1036.5px;top:673.5px;font-size:15.5px;line-height:20px;color:rgba(200,200,200,.55);white-space:pre">转到“设置”以激活 Windows。</div>

<!-- DOCK -->
<svg class="a" style="left:0;top:714px" width="1227" height="47" viewBox="0 0 1227 47"><rect x="0" y="0" width="4" height="47" fill="rgb(28, 22, 20)"/><rect x="4" y="0" width="4" height="47" fill="rgb(28, 22, 20)"/><rect x="8" y="0" width="4" height="47" fill="rgb(28, 22, 20)"/><rect x="12" y="0" width="4" height="47" fill="rgb(28, 22, 20)"/><rect x="16" y="0" width="4" height="47" fill="rgb(28, 22, 20)"/><rect x="20" y="0" width="4" height="47" fill="rgb(28, 22, 20)"/><rect x="24" y="0" width="4" height="47" fill="rgb(28, 22, 20)"/><rect x="28" y="0" width="4" height="47" fill="rgb(28, 22, 20)"/><rect x="32" y="0" width="4" height="47" fill="rgb(28, 22, 20)"/><rect x="36" y="0" width="4" height="47" fill="rgb(28, 22, 20)"/><rect x="40" y="0" width="4" height="47" fill="rgb(28, 22, 20)"/><rect x="44" y="0" width="4" height="47" fill="rgb(28, 22, 20)"/><rect x="48" y="0" width="4" height="47" fill="rgb(28, 22, 20)"/><rect x="52" y="0" width="4" height="47" fill="rgb(28, 22, 20)"/><rect x="56" y="0" width="4" height="47" fill="rgb(28, 22, 20)"/><rect x="60" y="0" width="4" height="47" fill="rgb(28, 22, 20)"/><rect x="64" y="0" width="4" height="47" fill="rgb(28, 22, 20)"/><rect x="68" y="0" width="4" height="47" fill="rgb(28, 22, 20)"/><rect x="72" y="0" width="4" height="47" fill="rgb(28, 22, 20)"/><rect x="76" y="0" width="4" height="47" fill="rgb(28, 22, 20)"/><rect x="80" y="0" width="4" height="47" fill="rgb(28, 22, 20)"/><rect x="84" y="0" width="4" height="47" fill="rgb(28, 22, 20)"/><rect x="88" y="0" width="4" height="47" fill="rgb(28, 22, 20)"/><rect x="92" y="0" width="4" height="47" fill="rgb(28, 22, 20)"/><rect x="96" y="0" width="4" height="47" fill="rgb(28, 22, 20)"/><rect x="100" y="0" width="4" height="47" fill="rgb(28, 22, 20)"/><rect x="104" y="0" width="4" height="47" fill="rgb(28, 22, 20)"/><rect x="108" y="0" width="4" height="47" fill="rgb(28, 22, 20)"/><rect x="112" y="0" width="4" height="47" fill="rgb(28, 22, 20)"/><rect x="116" y="0" width="4" height="47" fill="rgb(28, 22, 20)"/><rect x="120" y="0" width="4" height="47" fill="rgb(28, 22, 20)"/><rect x="124" y="0" width="4" height="47" fill="rgb(28, 22, 20)"/><rect x="128" y="0" width="4" height="47" fill="rgb(28, 22, 20)"/><rect x="132" y="0" width="4" height="47" fill="rgb(28, 22, 20)"/><rect x="136" y="0" width="4" height="47" fill="rgb(28, 22, 20)"/><rect x="140" y="0" width="4" height="47" fill="rgb(28, 22, 20)"/><rect x="144" y="0" width="4" height="47" fill="rgb(28, 22, 20)"/><rect x="148" y="0" width="4" height="47" fill="rgb(28, 22, 20)"/><rect x="152" y="0" width="4" height="47" fill="rgb(28, 22, 20)"/><rect x="156" y="0" width="4" height="47" fill="rgb(28, 22, 20)"/><rect x="160" y="0" width="4" height="47" fill="rgb(28, 22, 20)"/><rect x="164" y="0" width="4" height="47" fill="rgb(28, 22, 20)"/><rect x="168" y="0" width="4" height="47" fill="rgb(28, 22, 20)"/><rect x="172" y="0" width="4" height="47" fill="rgb(28, 22, 20)"/><rect x="176" y="0" width="4" height="47" fill="rgb(28, 22, 20)"/><rect x="180" y="0" width="4" height="47" fill="rgb(28, 22, 20)"/><rect x="184" y="0" width="4" height="47" fill="rgb(28, 22, 20)"/><rect x="188" y="0" width="4" height="47" fill="rgb(28, 22, 20)"/><rect x="192" y="0" width="4" height="47" fill="rgb(28, 22, 20)"/><rect x="196" y="0" width="4" height="47" fill="rgb(28, 22, 20)"/><rect x="200" y="0" width="4" height="47" fill="rgb(28, 22, 20)"/><rect x="204" y="0" width="4" height="47" fill="rgb(28, 22, 20)"/><rect x="208" y="0" width="4" height="47" fill="rgb(28, 22, 20)"/><rect x="212" y="0" width="4" height="47" fill="rgb(28, 22, 20)"/><rect x="216" y="0" width="4" height="47" fill="rgb(28, 22, 20)"/><rect x="220" y="0" width="4" height="47" fill="rgb(28, 22, 20)"/><rect x="224" y="0" width="4" height="47" fill="rgb(28, 22, 20)"/><rect x="228" y="0" width="4" height="47" fill="rgb(28, 22, 20)"/><rect x="232" y="0" width="4" height="47" fill="rgb(28, 22, 20)"/><rect x="236" y="0" width="4" height="47" fill="rgb(28, 22, 20)"/><rect x="240" y="0" width="4" height="47" fill="rgb(28, 22, 20)"/><rect x="244" y="0" width="4" height="47" fill="rgb(28, 22, 20)"/><rect x="248" y="0" width="4" height="47" fill="rgb(28, 22, 20)"/><rect x="252" y="0" width="4" height="47" fill="rgb(28, 22, 20)"/><rect x="256" y="0" width="4" height="47" fill="rgb(28, 22, 20)"/><rect x="260" y="0" width="4" height="47" fill="rgb(28, 22, 20)"/><rect x="264" y="0" width="4" height="47" fill="rgb(28, 22, 20)"/><rect x="268" y="0" width="4" height="47" fill="rgb(28, 22, 20)"/><rect x="272" y="0" width="4" height="47" fill="rgb(28, 22, 20)"/><rect x="276" y="0" width="4" height="47" fill="rgb(28, 22, 20)"/><rect x="280" y="0" width="4" height="47" fill="rgb(28, 22, 20)"/><rect x="284" y="0" width="4" height="47" fill="rgb(28, 22, 20)"/><rect x="288" y="0" width="4" height="47" fill="rgb(28, 22, 20)"/><rect x="292" y="0" width="4" height="47" fill="rgb(28, 22, 20)"/><rect x="296" y="0" width="4" height="47" fill="rgb(28, 22, 20)"/><rect x="300" y="0" width="4" height="47" fill="rgb(28, 22, 20)"/><rect x="304" y="0" width="4" height="47" fill="rgb(28, 22, 20)"/><rect x="308" y="0" width="4" height="47" fill="rgb(28, 22, 20)"/><rect x="312" y="0" width="4" height="47" fill="rgb(28, 22, 20)"/><rect x="316" y="0" width="4" height="47" fill="rgb(28, 22, 20)"/><rect x="320" y="0" width="4" height="47" fill="rgb(28, 22, 20)"/><rect x="324" y="0" width="4" height="47" fill="rgb(28, 22, 20)"/><rect x="328" y="0" width="4" height="47" fill="rgb(28, 22, 20)"/><rect x="332" y="0" width="4" height="47" fill="rgb(28, 22, 20)"/><rect x="336" y="0" width="4" height="47" fill="rgb(28, 22, 20)"/><rect x="340" y="0" width="4" height="47" fill="rgb(28, 22, 20)"/><rect x="344" y="0" width="4" height="47" fill="rgb(28, 22, 20)"/><rect x="348" y="0" width="4" height="47" fill="rgb(28, 22, 20)"/><rect x="352" y="0" width="4" height="47" fill="rgb(28, 22, 20)"/><rect x="356" y="0" width="4" height="47" fill="rgb(28, 22, 20)"/><rect x="360" y="0" width="4" height="47" fill="rgb(28, 22, 20)"/><rect x="364" y="0" width="4" height="47" fill="rgb(28, 22, 20)"/><rect x="368" y="0" width="4" height="47" fill="rgb(28, 22, 20)"/><rect x="372" y="0" width="4" height="47" fill="rgb(28, 22, 20)"/><rect x="376" y="0" width="4" height="47" fill="rgb(28, 22, 20)"/><rect x="380" y="0" width="4" height="47" fill="rgb(28, 22, 20)"/><rect x="384" y="0" width="4" height="47" fill="rgb(28, 22, 20)"/><rect x="388" y="0" width="4" height="47" fill="rgb(28, 22, 20)"/><rect x="392" y="0" width="4" height="47" fill="rgb(28, 22, 20)"/><rect x="396" y="0" width="4" height="47" fill="rgb(28, 22, 20)"/><rect x="400" y="0" width="4" height="47" fill="rgb(28, 22, 20)"/><rect x="404" y="0" width="4" height="47" fill="rgb(28, 22, 20)"/><rect x="408" y="0" width="4" height="47" fill="rgb(28, 22, 20)"/><rect x="412" y="0" width="4" height="47" fill="rgb(28, 22, 20)"/><rect x="416" y="0" width="4" height="47" fill="rgb(28, 22, 20)"/><rect x="420" y="0" width="4" height="47" fill="rgb(28, 22, 20)"/><rect x="424" y="0" width="4" height="47" fill="rgb(28, 22, 20)"/><rect x="428" y="0" width="4" height="47" fill="rgb(28, 22, 20)"/><rect x="432" y="0" width="4" height="47" fill="rgb(28, 22, 20)"/><rect x="436" y="0" width="4" height="47" fill="rgb(28, 22, 20)"/><rect x="440" y="0" width="4" height="47" fill="rgb(28, 22, 20)"/><rect x="444" y="0" width="4" height="47" fill="rgb(28, 22, 20)"/><rect x="448" y="0" width="4" height="47" fill="rgb(28, 22, 20)"/><rect x="452" y="0" width="4" height="47" fill="rgb(28, 22, 20)"/><rect x="456" y="0" width="4" height="47" fill="rgb(28, 22, 20)"/><rect x="460" y="0" width="4" height="47" fill="rgb(28, 22, 20)"/><rect x="464" y="0" width="4" height="47" fill="rgb(28, 22, 20)"/><rect x="468" y="0" width="4" height="47" fill="rgb(28, 22, 20)"/><rect x="472" y="0" width="4" height="47" fill="rgb(28, 22, 20)"/><rect x="476" y="0" width="4" height="47" fill="rgb(28, 22, 20)"/><rect x="480" y="0" width="4" height="47" fill="rgb(28, 22, 20)"/><rect x="484" y="0" width="4" height="47" fill="rgb(28, 22, 20)"/><rect x="488" y="0" width="4" height="47" fill="rgb(28, 22, 20)"/><rect x="492" y="0" width="4" height="47" fill="rgb(28, 22, 20)"/><rect x="496" y="0" width="4" height="47" fill="rgb(28, 22, 20)"/><rect x="500" y="0" width="4" height="47" fill="rgb(28, 22, 20)"/><rect x="504" y="0" width="4" height="47" fill="rgb(28, 22, 20)"/><rect x="508" y="0" width="4" height="47" fill="rgb(28, 22, 20)"/><rect x="512" y="0" width="4" height="47" fill="rgb(28, 22, 20)"/><rect x="516" y="0" width="4" height="47" fill="rgb(28, 22, 20)"/><rect x="520" y="0" width="4" height="47" fill="rgb(28, 22, 20)"/><rect x="524" y="0" width="4" height="47" fill="rgb(28, 22, 20)"/><rect x="528" y="0" width="4" height="47" fill="rgb(28, 22, 20)"/><rect x="532" y="0" width="4" height="47" fill="rgb(28, 22, 20)"/><rect x="536" y="0" width="4" height="47" fill="rgb(28, 22, 20)"/><rect x="540" y="0" width="4" height="47" fill="rgb(28, 22, 20)"/><rect x="544" y="0" width="4" height="47" fill="rgb(28, 22, 20)"/><rect x="548" y="0" width="4" height="47" fill="rgb(28, 22, 20)"/><rect x="552" y="0" width="4" height="47" fill="rgb(28, 22, 20)"/><rect x="556" y="0" width="4" height="47" fill="rgb(28, 22, 20)"/><rect x="560" y="0" width="4" height="47" fill="rgb(28, 22, 20)"/><rect x="564" y="0" width="4" height="47" fill="rgb(28, 22, 20)"/><rect x="568" y="0" width="4" height="47" fill="rgb(28, 22, 20)"/><rect x="572" y="0" width="4" height="47" fill="rgb(28, 22, 20)"/><rect x="576" y="0" width="4" height="47" fill="rgb(28, 22, 20)"/><rect x="580" y="0" width="4" height="47" fill="rgb(28, 22, 20)"/><rect x="584" y="0" width="4" height="47" fill="rgb(28, 22, 20)"/><rect x="588" y="0" width="4" height="47" fill="rgb(28, 22, 20)"/><rect x="592" y="0" width="4" height="47" fill="rgb(28, 22, 20)"/><rect x="596" y="0" width="4" height="47" fill="rgb(28, 22, 20)"/><rect x="600" y="0" width="4" height="47" fill="rgb(26, 32, 42)"/><rect x="604" y="0" width="4" height="47" fill="rgb(26, 32, 42)"/><rect x="608" y="0" width="4" height="47" fill="rgb(26, 32, 42)"/><rect x="612" y="0" width="4" height="47" fill="rgb(26, 32, 42)"/><rect x="616" y="0" width="4" height="47" fill="rgb(26, 32, 42)"/><rect x="620" y="0" width="4" height="47" fill="rgb(26, 32, 42)"/><rect x="624" y="0" width="4" height="47" fill="rgb(26, 32, 42)"/><rect x="628" y="0" width="4" height="47" fill="rgb(26, 32, 42)"/><rect x="632" y="0" width="4" height="47" fill="rgb(26, 32, 42)"/><rect x="636" y="0" width="4" height="47" fill="rgb(26, 32, 42)"/><rect x="640" y="0" width="4" height="47" fill="rgb(26, 32, 42)"/><rect x="644" y="0" width="4" height="47" fill="rgb(26, 32, 42)"/><rect x="648" y="0" width="4" height="47" fill="rgb(26, 32, 42)"/><rect x="652" y="0" width="4" height="47" fill="rgb(26, 32, 42)"/><rect x="656" y="0" width="4" height="47" fill="rgb(26, 32, 42)"/><rect x="660" y="0" width="4" height="47" fill="rgb(26, 32, 42)"/><rect x="664" y="0" width="4" height="47" fill="rgb(26, 32, 42)"/><rect x="668" y="0" width="4" height="47" fill="rgb(26, 32, 42)"/><rect x="672" y="0" width="4" height="47" fill="rgb(26, 32, 42)"/><rect x="676" y="0" width="4" height="47" fill="rgb(26, 32, 42)"/><rect x="680" y="0" width="4" height="47" fill="rgb(26, 32, 42)"/><rect x="684" y="0" width="4" height="47" fill="rgb(26, 32, 42)"/><rect x="688" y="0" width="4" height="47" fill="rgb(26, 32, 42)"/><rect x="692" y="0" width="4" height="47" fill="rgb(26, 32, 42)"/><rect x="696" y="0" width="4" height="47" fill="rgb(26, 32, 42)"/><rect x="700" y="0" width="4" height="47" fill="rgb(26, 32, 42)"/><rect x="704" y="0" width="4" height="47" fill="rgb(26, 32, 42)"/><rect x="708" y="0" width="4" height="47" fill="rgb(26, 32, 42)"/><rect x="712" y="0" width="4" height="47" fill="rgb(26, 32, 42)"/><rect x="716" y="0" width="4" height="47" fill="rgb(26, 32, 42)"/><rect x="720" y="0" width="4" height="47" fill="rgb(26, 32, 42)"/><rect x="724" y="0" width="4" height="47" fill="rgb(26, 32, 42)"/><rect x="728" y="0" width="4" height="47" fill="rgb(26, 32, 42)"/><rect x="732" y="0" width="4" height="47" fill="rgb(26, 32, 42)"/><rect x="736" y="0" width="4" height="47" fill="rgb(26, 32, 42)"/><rect x="740" y="0" width="4" height="47" fill="rgb(26, 32, 42)"/><rect x="744" y="0" width="4" height="47" fill="rgb(26, 32, 42)"/><rect x="748" y="0" width="4" height="47" fill="rgb(26, 32, 42)"/><rect x="752" y="0" width="4" height="47" fill="rgb(26, 32, 42)"/><rect x="756" y="0" width="4" height="47" fill="rgb(26, 32, 42)"/><rect x="760" y="0" width="4" height="47" fill="rgb(26, 32, 42)"/><rect x="764" y="0" width="4" height="47" fill="rgb(26, 32, 42)"/><rect x="768" y="0" width="4" height="47" fill="rgb(26, 32, 42)"/><rect x="772" y="0" width="4" height="47" fill="rgb(26, 32, 42)"/><rect x="776" y="0" width="4" height="47" fill="rgb(26, 32, 42)"/><rect x="780" y="0" width="4" height="47" fill="rgb(26, 32, 42)"/><rect x="784" y="0" width="4" height="47" fill="rgb(26, 32, 42)"/><rect x="788" y="0" width="4" height="47" fill="rgb(26, 32, 42)"/><rect x="792" y="0" width="4" height="47" fill="rgb(26, 32, 42)"/><rect x="796" y="0" width="4" height="47" fill="rgb(26, 32, 42)"/><rect x="800" y="0" width="4" height="47" fill="rgb(26, 32, 42)"/><rect x="804" y="0" width="4" height="47" fill="rgb(26, 32, 42)"/><rect x="808" y="0" width="4" height="47" fill="rgb(26, 32, 42)"/><rect x="812" y="0" width="4" height="47" fill="rgb(26, 32, 42)"/><rect x="816" y="0" width="4" height="47" fill="rgb(26, 32, 42)"/><rect x="820" y="0" width="4" height="47" fill="rgb(26, 32, 42)"/><rect x="824" y="0" width="4" height="47" fill="rgb(26, 32, 42)"/><rect x="828" y="0" width="4" height="47" fill="rgb(26, 32, 42)"/><rect x="832" y="0" width="4" height="47" fill="rgb(26, 32, 42)"/><rect x="836" y="0" width="4" height="47" fill="rgb(26, 32, 42)"/><rect x="840" y="0" width="4" height="47" fill="rgb(26, 32, 42)"/><rect x="844" y="0" width="4" height="47" fill="rgb(26, 32, 42)"/><rect x="848" y="0" width="4" height="47" fill="rgb(26, 32, 42)"/><rect x="852" y="0" width="4" height="47" fill="rgb(26, 32, 42)"/><rect x="856" y="0" width="4" height="47" fill="rgb(26, 32, 42)"/><rect x="860" y="0" width="4" height="47" fill="rgb(90, 42, 28)"/><rect x="864" y="0" width="4" height="47" fill="rgb(90, 42, 28)"/><rect x="868" y="0" width="4" height="47" fill="rgb(90, 42, 28)"/><rect x="872" y="0" width="4" height="47" fill="rgb(90, 42, 28)"/><rect x="876" y="0" width="4" height="47" fill="rgb(90, 42, 28)"/><rect x="880" y="0" width="4" height="47" fill="rgb(90, 42, 28)"/><rect x="884" y="0" width="4" height="47" fill="rgb(90, 42, 28)"/><rect x="888" y="0" width="4" height="47" fill="rgb(90, 42, 28)"/><rect x="892" y="0" width="4" height="47" fill="rgb(90, 42, 28)"/><rect x="896" y="0" width="4" height="47" fill="rgb(90, 42, 28)"/><rect x="900" y="0" width="4" height="47" fill="rgb(90, 42, 28)"/><rect x="904" y="0" width="4" height="47" fill="rgb(90, 42, 28)"/><rect x="908" y="0" width="4" height="47" fill="rgb(90, 42, 28)"/><rect x="912" y="0" width="4" height="47" fill="rgb(90, 42, 28)"/><rect x="916" y="0" width="4" height="47" fill="rgb(90, 42, 28)"/><rect x="920" y="0" width="4" height="47" fill="rgb(90, 42, 28)"/><rect x="924" y="0" width="4" height="47" fill="rgb(90, 42, 28)"/><rect x="928" y="0" width="4" height="47" fill="rgb(90, 42, 28)"/><rect x="932" y="0" width="4" height="47" fill="rgb(90, 42, 28)"/><rect x="936" y="0" width="4" height="47" fill="rgb(90, 42, 28)"/><rect x="940" y="0" width="4" height="47" fill="rgb(90, 42, 28)"/><rect x="944" y="0" width="4" height="47" fill="rgb(90, 42, 28)"/><rect x="948" y="0" width="4" height="47" fill="rgb(90, 42, 28)"/><rect x="952" y="0" width="4" height="47" fill="rgb(90, 42, 28)"/><rect x="956" y="0" width="4" height="47" fill="rgb(90, 42, 28)"/><rect x="960" y="0" width="4" height="47" fill="rgb(90, 42, 28)"/><rect x="964" y="0" width="4" height="47" fill="rgb(90, 42, 28)"/><rect x="968" y="0" width="4" height="47" fill="rgb(90, 42, 28)"/><rect x="972" y="0" width="4" height="47" fill="rgb(90, 42, 28)"/><rect x="976" y="0" width="4" height="47" fill="rgb(90, 42, 28)"/><rect x="980" y="0" width="4" height="47" fill="rgb(90, 42, 28)"/><rect x="984" y="0" width="4" height="47" fill="rgb(90, 42, 28)"/><rect x="988" y="0" width="4" height="47" fill="rgb(90, 42, 28)"/><rect x="992" y="0" width="4" height="47" fill="rgb(90, 42, 28)"/><rect x="996" y="0" width="4" height="47" fill="rgb(90, 42, 28)"/><rect x="1000" y="0" width="4" height="47" fill="rgb(90, 42, 28)"/><rect x="1004" y="0" width="4" height="47" fill="rgb(90, 42, 28)"/><rect x="1008" y="0" width="4" height="47" fill="rgb(90, 42, 28)"/><rect x="1012" y="0" width="4" height="47" fill="rgb(90, 42, 28)"/><rect x="1016" y="0" width="4" height="47" fill="rgb(90, 42, 28)"/><rect x="1020" y="0" width="4" height="47" fill="rgb(90, 42, 28)"/><rect x="1024" y="0" width="4" height="47" fill="rgb(90, 42, 28)"/><rect x="1028" y="0" width="4" height="47" fill="rgb(90, 42, 28)"/><rect x="1032" y="0" width="4" height="47" fill="rgb(90, 42, 28)"/><rect x="1036" y="0" width="4" height="47" fill="rgb(90, 42, 28)"/><rect x="1040" y="0" width="4" height="47" fill="rgb(90, 42, 28)"/><rect x="1044" y="0" width="4" height="47" fill="rgb(90, 42, 28)"/><rect x="1048" y="0" width="4" height="47" fill="rgb(24, 34, 50)"/><rect x="1052" y="0" width="4" height="47" fill="rgb(24, 34, 50)"/><rect x="1056" y="0" width="4" height="47" fill="rgb(24, 34, 50)"/><rect x="1060" y="0" width="4" height="47" fill="rgb(24, 34, 50)"/><rect x="1064" y="0" width="4" height="47" fill="rgb(24, 34, 50)"/><rect x="1068" y="0" width="4" height="47" fill="rgb(24, 34, 50)"/><rect x="1072" y="0" width="4" height="47" fill="rgb(24, 34, 50)"/><rect x="1076" y="0" width="4" height="47" fill="rgb(24, 34, 50)"/><rect x="1080" y="0" width="4" height="47" fill="rgb(24, 34, 50)"/><rect x="1084" y="0" width="4" height="47" fill="rgb(24, 34, 50)"/><rect x="1088" y="0" width="4" height="47" fill="rgb(24, 34, 50)"/><rect x="1092" y="0" width="4" height="47" fill="rgb(24, 34, 50)"/><rect x="1096" y="0" width="4" height="47" fill="rgb(24, 34, 50)"/><rect x="1100" y="0" width="4" height="47" fill="rgb(24, 34, 50)"/><rect x="1104" y="0" width="4" height="47" fill="rgb(24, 34, 50)"/><rect x="1108" y="0" width="4" height="47" fill="rgb(24, 34, 50)"/><rect x="1112" y="0" width="4" height="47" fill="rgb(24, 34, 50)"/><rect x="1116" y="0" width="4" height="47" fill="rgb(24, 34, 50)"/><rect x="1120" y="0" width="4" height="47" fill="rgb(24, 34, 50)"/><rect x="1124" y="0" width="4" height="47" fill="rgb(24, 34, 50)"/><rect x="1128" y="0" width="4" height="47" fill="rgb(24, 34, 50)"/><rect x="1132" y="0" width="4" height="47" fill="rgb(24, 34, 50)"/><rect x="1136" y="0" width="4" height="47" fill="rgb(24, 34, 50)"/><rect x="1140" y="0" width="4" height="47" fill="rgb(24, 34, 50)"/><rect x="1144" y="0" width="4" height="47" fill="rgb(24, 34, 50)"/><rect x="1148" y="0" width="4" height="47" fill="rgb(24, 34, 50)"/><rect x="1152" y="0" width="4" height="47" fill="rgb(24, 34, 50)"/><rect x="1156" y="0" width="4" height="47" fill="rgb(24, 34, 50)"/><rect x="1160" y="0" width="4" height="47" fill="rgb(24, 34, 50)"/><rect x="1164" y="0" width="4" height="47" fill="rgb(24, 34, 50)"/><rect x="1168" y="0" width="4" height="47" fill="rgb(24, 34, 50)"/><rect x="1172" y="0" width="4" height="47" fill="rgb(24, 34, 50)"/><rect x="1176" y="0" width="4" height="47" fill="rgb(24, 34, 50)"/><rect x="1180" y="0" width="4" height="47" fill="rgb(24, 34, 50)"/><rect x="1184" y="0" width="4" height="47" fill="rgb(24, 34, 50)"/><rect x="1188" y="0" width="4" height="47" fill="rgb(24, 34, 50)"/><rect x="1192" y="0" width="4" height="47" fill="rgb(24, 34, 50)"/><rect x="1196" y="0" width="4" height="47" fill="rgb(24, 34, 50)"/><rect x="1200" y="0" width="4" height="47" fill="rgb(24, 34, 50)"/><rect x="1204" y="0" width="4" height="47" fill="rgb(24, 34, 50)"/><rect x="1208" y="0" width="4" height="47" fill="rgb(24, 34, 50)"/><rect x="1212" y="0" width="4" height="47" fill="rgb(24, 34, 50)"/><rect x="1216" y="0" width="4" height="47" fill="rgb(24, 34, 50)"/><rect x="1220" y="0" width="4" height="47" fill="rgb(24, 34, 50)"/><rect x="1224" y="0" width="4" height="47" fill="rgb(24, 34, 50)"/><path d="M397 3 L399 2 L399 7 L395 6Z" fill="rgb(40, 32, 29)"/><path d="M86 2 L91 2 L94 4 L86 3Z" fill="rgb(34, 27, 24)"/><path d="M1198 1 L1200 0 L1202 3 L1197 3Z" fill="rgb(116, 134, 157)"/><path d="M784 7 L785 7 L785 8 L783 8Z" fill="rgb(64, 74, 89)"/><path d="M556 5 L562 5 L563 8 L557 7Z" fill="rgb(44, 36, 32)"/><path d="M1203 2 L1209 1 L1209 4 L1204 4Z" fill="rgb(55, 68, 86)"/><path d="M1074 6 L1079 6 L1081 10 L1074 9Z" fill="rgb(91, 107, 128)"/><path d="M74 13 L81 12 L82 18 L73 16Z" fill="rgb(40, 32, 29)"/><path d="M206 2 L211 2 L214 4 L205 4Z" fill="rgb(28, 22, 20)"/><path d="M674 16 L680 16 L682 19 L676 17Z" fill="rgb(95, 110, 129)"/><path d="M216 4 L220 3 L220 8 L216 7Z" fill="rgb(30, 24, 22)"/><path d="M1169 12 L1173 13 L1175 17 L1171 17Z" fill="rgb(66, 80, 99)"/><path d="M481 7 L485 7 L484 9 L481 8Z" fill="rgb(28, 22, 20)"/><path d="M0 3 L5 3 L2 4 L-1 4Z" fill="rgb(28, 22, 20)"/><path d="M447 2 L454 1 L451 6 L446 4Z" fill="rgb(46, 37, 34)"/><path d="M1017 3 L1023 3 L1020 7 L1017 7Z" fill="rgb(90, 42, 28)"/><path d="M1059 13 L1064 13 L1063 15 L1059 14Z" fill="rgb(39, 50, 68)"/><path d="M996 18 L1003 17 L1001 23 L995 20Z" fill="rgb(192, 99, 61)"/><path d="M34 5 L40 6 L42 11 L36 9Z" fill="rgb(31, 24, 22)"/><path d="M271 4 L274 5 L273 8 L271 8Z" fill="rgb(30, 23, 21)"/><path d="M104 12 L110 11 L111 17 L103 16Z" fill="rgb(48, 39, 35)"/><path d="M1192 7 L1198 6 L1196 12 L1194 11Z" fill="rgb(53, 66, 84)"/><path d="M179 15 L185 14 L182 18 L181 17Z" fill="rgb(51, 41, 37)"/><path d="M646 17 L652 16 L651 22 L645 21Z" fill="rgb(52, 62, 75)"/><path d="M318 8 L325 8 L327 11 L318 11Z" fill="rgb(29, 22, 20)"/><path d="M616 10 L617 9 L617 13 L614 12Z" fill="rgb(61, 72, 86)"/><path d="M890 10 L895 9 L894 14 L889 13Z" fill="rgb(114, 55, 35)"/><path d="M948 9 L953 9 L953 15 L948 14Z" fill="rgb(144, 72, 45)"/><path d="M555 10 L564 10 L560 14 L555 14Z" fill="rgb(35, 28, 25)"/><path d="M1031 2 L1034 2 L1035 4 L1032 4Z" fill="rgb(95, 45, 29)"/><path d="M190 13 L193 12 L193 18 L189 17Z" fill="rgb(40, 32, 29)"/><path d="M1215 15 L1218 14 L1217 19 L1215 17Z" fill="rgb(31, 42, 58)"/><path d="M680 8 L683 7 L684 12 L681 12Z" fill="rgb(26, 32, 42)"/><path d="M129 5 L133 5 L136 7 L130 6Z" fill="rgb(28, 22, 20)"/><path d="M183 17 L187 17 L188 18 L182 18Z" fill="rgb(38, 30, 27)"/><path d="M778 14 L787 14 L783 16 L779 16Z" fill="rgb(28, 34, 44)"/><path d="M329 2 L331 1 L330 4 L328 4Z" fill="rgb(37, 29, 26)"/><path d="M932 5 L934 5 L933 8 L933 8Z" fill="rgb(135, 67, 42)"/><path d="M232 9 L235 9 L235 14 L232 12Z" fill="rgb(49, 40, 36)"/><path d="M844 18 L851 17 L849 22 L842 20Z" fill="rgb(44, 53, 65)"/><path d="M87 13 L90 14 L89 15 L86 15Z" fill="rgb(31, 24, 22)"/><path d="M360 8 L365 9 L363 11 L359 11Z" fill="rgb(29, 23, 21)"/><path d="M380 6 L384 6 L383 10 L378 9Z" fill="rgb(28, 22, 20)"/><path d="M110 7 L111 7 L112 10 L111 10Z" fill="rgb(28, 22, 20)"/><path d="M879 16 L881 16 L882 22 L877 21Z" fill="rgb(121, 59, 38)"/><path d="M1094 11 L1101 11 L1102 13 L1096 13Z" fill="rgb(96, 113, 134)"/><path d="M717 16 L721 15 L721 19 L715 18Z" fill="rgb(79, 91, 108)"/><path d="M685 11 L689 12 L691 15 L685 14Z" fill="rgb(72, 84, 100)"/><path d="M809 1 L812 2 L811 3 L810 3Z" fill="rgb(85, 99, 116)"/><path d="M606 7 L612 7 L609 12 L605 10Z" fill="rgb(57, 67, 81)"/><path d="M912 5 L913 6 L914 7 L913 7Z" fill="rgb(145, 73, 45)"/><path d="M634 8 L636 9 L637 14 L632 12Z" fill="rgb(55, 65, 79)"/><path d="M1006 17 L1010 17 L1009 20 L1005 19Z" fill="rgb(129, 63, 40)"/><path d="M1169 2 L1174 2 L1175 8 L1169 5Z" fill="rgb(110, 127, 150)"/><path d="M4 9 L7 8 L8 11 L2 11Z" fill="rgb(35, 28, 25)"/><path d="M1030 2 L1035 2 L1034 8 L1032 7Z" fill="rgb(205, 107, 65)"/><path d="M443 8 L445 7 L445 10 L442 9Z" fill="rgb(31, 24, 22)"/><path d="M627 3 L636 4 L636 9 L629 8Z" fill="rgb(47, 56, 68)"/><path d="M883 1 L888 0 L885 6 L885 4Z" fill="rgb(171, 87, 54)"/><path d="M579 6 L584 6 L583 12 L580 10Z" fill="rgb(31, 25, 22)"/><path d="M205 3 L211 4 L215 7 L205 5Z" fill="rgb(30, 23, 21)"/><path d="M236 2 L238 2 L239 4 L237 3Z" fill="rgb(32, 25, 23)"/><path d="M508 9 L511 10 L510 11 L508 11Z" fill="rgb(33, 26, 24)"/><path d="M1059 4 L1062 5 L1062 7 L1060 6Z" fill="rgb(40, 51, 69)"/><path d="M40 13 L42 13 L45 17 L41 17Z" fill="rgb(48, 38, 35)"/><path d="M1193 4 L1196 5 L1196 8 L1194 8Z" fill="rgb(28, 38, 54)"/><path d="M561 10 L569 10 L565 12 L560 12Z" fill="rgb(28, 22, 20)"/><path d="M781 13 L783 12 L782 16 L781 15Z" fill="rgb(29, 35, 46)"/><path d="M370 8 L375 8 L373 14 L372 13Z" fill="rgb(50, 40, 36)"/><path d="M377 0 L382 1 L384 4 L376 2Z" fill="rgb(36, 29, 26)"/><path d="M415 8 L418 8 L416 13 L417 11Z" fill="rgb(41, 33, 30)"/><path d="M1006 4 L1014 4 L1010 7 L1005 6Z" fill="rgb(103, 49, 32)"/><path d="M816 17 L821 16 L818 20 L815 19Z" fill="rgb(31, 37, 48)"/><path d="M1102 16 L1109 15 L1112 22 L1103 19Z" fill="rgb(96, 113, 134)"/><path d="M815 7 L818 6 L818 9 L817 8Z" fill="rgb(47, 56, 68)"/><path d="M1183 4 L1189 3 L1189 9 L1183 9Z" fill="rgb(48, 60, 78)"/><path d="M237 7 L239 7 L238 10 L235 8Z" fill="rgb(48, 38, 35)"/><path d="M1129 5 L1135 6 L1136 8 L1128 7Z" fill="rgb(98, 115, 137)"/><path d="M388 5 L395 6 L391 11 L387 9Z" fill="rgb(28, 22, 20)"/><path d="M1174 17 L1177 18 L1176 21 L1175 20Z" fill="rgb(51, 64, 82)"/><path d="M1010 14 L1013 14 L1011 17 L1008 16Z" fill="rgb(151, 76, 47)"/><path d="M303 1 L310 2 L310 4 L303 3Z" fill="rgb(28, 22, 20)"/><path d="M118 9 L122 9 L123 12 L119 11Z" fill="rgb(42, 33, 30)"/><path d="M815 2 L818 3 L817 6 L814 5Z" fill="rgb(98, 113, 132)"/><path d="M188 16 L193 16 L190 19 L189 19Z" fill="rgb(38, 30, 27)"/><path d="M1216 2 L1224 1 L1220 7 L1214 5Z" fill="rgb(61, 75, 94)"/><path d="M1194 10 L1197 10 L1198 16 L1196 13Z" fill="rgb(128, 147, 171)"/><path d="M731 11 L734 11 L735 13 L732 12Z" fill="rgb(35, 42, 53)"/><path d="M14 6 L16 6 L16 9 L12 7Z" fill="rgb(41, 33, 30)"/><path d="M485 10 L487 10 L486 12 L484 12Z" fill="rgb(40, 32, 29)"/><path d="M383 10 L389 10 L386 16 L384 13Z" fill="rgb(33, 26, 23)"/><path d="M7 16 L15 16 L11 20 L5 19Z" fill="rgb(34, 27, 24)"/><path d="M786 16 L791 16 L790 20 L786 19Z" fill="rgb(28, 34, 45)"/><path d="M133 9 L139 10 L143 11 L133 10Z" fill="rgb(45, 36, 32)"/><path d="M1136 7 L1140 8 L1140 12 L1136 12Z" fill="rgb(123, 142, 166)"/><path d="M1017 3 L1021 3 L1020 7 L1018 7Z" fill="rgb(103, 49, 32)"/><path d="M50 10 L52 10 L52 15 L51 14Z" fill="rgb(43, 35, 31)"/><path d="M515 10 L521 10 L521 14 L515 13Z" fill="rgb(34, 27, 25)"/><path d="M937 14 L939 13 L939 18 L935 17Z" fill="rgb(130, 64, 41)"/><path d="M626 1 L628 1 L627 6 L626 4Z" fill="rgb(73, 85, 101)"/><path d="M1167 2 L1176 2 L1177 7 L1167 7Z" fill="rgb(116, 133, 157)"/><path d="M1124 3 L1130 3 L1128 5 L1126 4Z" fill="rgb(105, 122, 144)"/><path d="M1001 3 L1007 3 L1006 5 L999 4Z" fill="rgb(136, 67, 42)"/><path d="M198 17 L206 16 L204 19 L198 18Z" fill="rgb(41, 33, 30)"/><path d="M1071 10 L1080 10 L1076 12 L1072 11Z" fill="rgb(75, 89, 109)"/><path d="M1215 10 L1220 11 L1218 14 L1217 13Z" fill="rgb(49, 61, 79)"/><path d="M784 18 L788 17 L787 21 L785 20Z" fill="rgb(68, 79, 94)"/><path d="M629 16 L631 15 L631 21 L627 19Z" fill="rgb(30, 37, 47)"/><path d="M275 11 L278 10 L279 15 L274 13Z" fill="rgb(38, 31, 28)"/><path d="M118 11 L123 11 L124 15 L118 14Z" fill="rgb(47, 38, 34)"/><path d="M792 8 L800 7 L797 11 L792 10Z" fill="rgb(111, 128, 149)"/><path d="M72 14 L75 13 L76 20 L72 19Z" fill="rgb(28, 22, 20)"/><path d="M998 3 L1002 4 L1002 5 L996 5Z" fill="rgb(112, 54, 35)"/><path d="M914 8 L917 8 L916 11 L914 11Z" fill="rgb(173, 88, 54)"/><path d="M853 15 L856 16 L856 19 L852 18Z" fill="rgb(82, 95, 112)"/><path d="M1184 4 L1186 4 L1186 7 L1185 6Z" fill="rgb(119, 138, 161)"/><path d="M1080 6 L1088 6 L1089 10 L1080 10Z" fill="rgb(37, 48, 65)"/><path d="M856 15 L861 15 L862 20 L854 19Z" fill="rgb(53, 62, 76)"/><path d="M177 0 L183 -0 L181 4 L178 3Z" fill="rgb(28, 22, 20)"/><path d="M855 13 L861 14 L861 16 L853 16Z" fill="rgb(27, 33, 43)"/><path d="M1122 17 L1124 18 L1125 19 L1123 19Z" fill="rgb(28, 38, 54)"/><path d="M775 5 L777 5 L777 10 L773 8Z" fill="rgb(28, 35, 45)"/><path d="M347 13 L350 14 L350 19 L345 17Z" fill="rgb(33, 26, 24)"/><path d="M536 14 L540 15 L538 18 L537 16Z" fill="rgb(32, 26, 23)"/><path d="M2 4 L9 4 L10 5 L0 5Z" fill="rgb(43, 35, 31)"/><path d="M426 15 L432 15 L432 18 L424 17Z" fill="rgb(31, 24, 22)"/><path d="M99 14 L105 14 L104 19 L101 17Z" fill="rgb(41, 33, 30)"/><path d="M1090 0 L1093 0 L1094 6 L1089 5Z" fill="rgb(34, 45, 62)"/><path d="M652 14 L657 13 L659 17 L653 16Z" fill="rgb(87, 101, 119)"/><path d="M208 8 L213 9 L211 10 L207 9Z" fill="rgb(44, 35, 32)"/><path d="M863 15 L865 15 L864 18 L862 17Z" fill="rgb(97, 46, 30)"/><path d="M1197 13 L1203 14 L1205 15 L1197 15Z" fill="rgb(27, 38, 54)"/><path d="M241 11 L243 11 L244 15 L242 14Z" fill="rgb(28, 22, 20)"/><path d="M776 8 L782 9 L780 12 L776 11Z" fill="rgb(31, 37, 48)"/><path d="M517 4 L524 5 L524 9 L517 8Z" fill="rgb(42, 34, 31)"/><path d="M384 11 L389 12 L387 16 L384 15Z" fill="rgb(28, 22, 20)"/><path d="M763 7 L770 8 L768 10 L763 10Z" fill="rgb(78, 90, 107)"/><path d="M47 10 L53 9 L53 16 L47 15Z" fill="rgb(29, 23, 21)"/><path d="M628 12 L634 11 L633 15 L628 14Z" fill="rgb(96, 112, 131)"/><path d="M150 18 L152 17 L152 20 L150 20Z" fill="rgb(33, 26, 23)"/><path d="M432 5 L438 4 L439 11 L432 8Z" fill="rgb(30, 24, 21)"/><path d="M159 14 L164 13 L166 18 L158 17Z" fill="rgb(45, 36, 33)"/><path d="M1005 15 L1007 15 L1007 19 L1006 17Z" fill="rgb(131, 65, 41)"/><path d="M462 5 L465 4 L463 6 L461 6Z" fill="rgb(34, 27, 25)"/><path d="M526 11 L530 11 L530 17 L527 17Z" fill="rgb(40, 32, 29)"/><path d="M172 15 L174 15 L173 17 L171 16Z" fill="rgb(40, 32, 29)"/><path d="M287 14 L290 13 L290 20 L287 19Z" fill="rgb(32, 26, 23)"/><path d="M820 16 L828 16 L827 18 L820 18Z" fill="rgb(91, 106, 124)"/><path d="M681 5 L683 5 L682 8 L681 8Z" fill="rgb(36, 44, 55)"/><path d="M662 16 L669 16 L670 19 L662 18Z" fill="rgb(26, 32, 42)"/><path d="M1179 1 L1184 2 L1185 3 L1178 3Z" fill="rgb(82, 98, 118)"/><path d="M627 9 L628 8 L629 13 L626 12Z" fill="rgb(105, 122, 142)"/><path d="M645 14 L649 15 L648 17 L646 16Z" fill="rgb(35, 42, 53)"/><path d="M618 5 L627 5 L623 9 L617 8Z" fill="rgb(59, 70, 84)"/><path d="M779 14 L785 13 L783 20 L777 17Z" fill="rgb(26, 32, 42)"/><path d="M1131 11 L1137 11 L1137 17 L1131 15Z" fill="rgb(85, 101, 122)"/><path d="M836 4 L839 3 L837 9 L837 9Z" fill="rgb(77, 89, 106)"/><path d="M805 7 L810 6 L810 11 L804 10Z" fill="rgb(96, 111, 130)"/><path d="M787 17 L791 17 L792 18 L789 18Z" fill="rgb(27, 33, 43)"/><path d="M17 7 L24 7 L21 13 L18 11Z" fill="rgb(38, 31, 28)"/><path d="M186 0 L194 -1 L193 2 L185 1Z" fill="rgb(28, 22, 20)"/><path d="M883 4 L886 5 L886 6 L884 5Z" fill="rgb(171, 87, 54)"/><path d="M771 13 L781 13 L774 15 L769 15Z" fill="rgb(55, 65, 78)"/><path d="M1003 1 L1010 1 L1006 4 L1002 3Z" fill="rgb(112, 54, 35)"/><path d="M538 12 L545 12 L543 15 L538 15Z" fill="rgb(29, 23, 20)"/><path d="M1159 14 L1164 15 L1163 16 L1159 16Z" fill="rgb(73, 87, 107)"/><path d="M1199 15 L1204 15 L1203 18 L1200 18Z" fill="rgb(78, 92, 112)"/><path d="M991 5 L994 6 L995 9 L989 8Z" fill="rgb(90, 42, 28)"/><path d="M996 16 L1000 16 L1000 21 L995 19Z" fill="rgb(146, 73, 46)"/><path d="M679 14 L684 15 L686 20 L679 18Z" fill="rgb(34, 41, 52)"/><path d="M313 14 L318 14 L315 15 L313 15Z" fill="rgb(44, 36, 32)"/><path d="M1086 9 L1090 9 L1091 12 L1085 11Z" fill="rgb(62, 75, 94)"/><path d="M494 9 L495 9 L496 15 L495 13Z" fill="rgb(29, 23, 21)"/><path d="M733 6 L735 7 L734 8 L733 7Z" fill="rgb(61, 71, 86)"/><path d="M956 8 L964 7 L959 13 L955 11Z" fill="rgb(209, 109, 66)"/><path d="M103 1 L111 2 L106 4 L103 3Z" fill="rgb(37, 30, 27)"/><path d="M147 17 L154 18 L151 22 L147 20Z" fill="rgb(31, 24, 22)"/><path d="M1185 18 L1187 19 L1187 21 L1186 19Z" fill="rgb(36, 47, 64)"/><path d="M965 13 L971 13 L974 15 L966 14Z" fill="rgb(157, 79, 49)"/><path d="M726 14 L728 14 L728 16 L725 15Z" fill="rgb(29, 35, 46)"/><path d="M831 0 L835 -0 L835 2 L833 2Z" fill="rgb(83, 96, 113)"/><path d="M171 8 L179 8 L177 13 L173 12Z" fill="rgb(28, 22, 20)"/><path d="M771 3 L773 2 L773 7 L770 6Z" fill="rgb(35, 43, 54)"/><path d="M191 5 L195 5 L195 7 L189 7Z" fill="rgb(46, 37, 33)"/><path d="M70 16 L72 16 L71 20 L69 20Z" fill="rgb(41, 32, 29)"/><path d="M1225 17 L1227 17 L1227 22 L1227 19Z" fill="rgb(27, 37, 54)"/><path d="M990 6 L992 6 L991 11 L992 9Z" fill="rgb(96, 45, 30)"/><path d="M701 2 L706 2 L704 7 L701 6Z" fill="rgb(33, 40, 51)"/><path d="M336 4 L342 3 L339 9 L337 7Z" fill="rgb(39, 31, 28)"/><path d="M885 1 L890 1 L887 6 L887 5Z" fill="rgb(184, 95, 58)"/><path d="M1070 5 L1075 5 L1076 8 L1068 7Z" fill="rgb(33, 44, 60)"/><path d="M547 9 L554 9 L553 14 L546 14Z" fill="rgb(29, 22, 20)"/><path d="M75 16 L80 16 L77 20 L77 18Z" fill="rgb(50, 40, 36)"/><path d="M224 2 L228 2 L228 3 L222 3Z" fill="rgb(31, 24, 22)"/><path d="M707 9 L710 9 L708 15 L707 13Z" fill="rgb(81, 94, 111)"/><path d="M343 2 L346 1 L345 6 L344 5Z" fill="rgb(34, 27, 24)"/><path d="M1014 17 L1018 17 L1019 22 L1015 20Z" fill="rgb(121, 59, 38)"/><path d="M295 6 L304 7 L304 11 L293 10Z" fill="rgb(34, 27, 25)"/><path d="M1175 17 L1179 17 L1177 21 L1175 20Z" fill="rgb(38, 49, 66)"/><path d="M26 3 L32 3 L33 8 L27 5Z" fill="rgb(50, 41, 37)"/><path d="M787 5 L791 5 L789 9 L787 8Z" fill="rgb(78, 91, 107)"/><path d="M1167 5 L1172 6 L1171 7 L1166 7Z" fill="rgb(43, 55, 72)"/><path d="M655 3 L657 2 L656 5 L653 5Z" fill="rgb(30, 36, 47)"/><path d="M1030 11 L1037 11 L1035 13 L1031 13Z" fill="rgb(145, 73, 46)"/><path d="M381 4 L386 3 L384 8 L382 6Z" fill="rgb(30, 24, 21)"/><path d="M683 9 L692 8 L686 12 L684 11Z" fill="rgb(40, 48, 59)"/><path d="M76 7 L81 8 L83 9 L75 8Z" fill="rgb(35, 27, 25)"/><path d="M432 12 L439 13 L440 17 L434 16Z" fill="rgb(39, 31, 28)"/><path d="M963 13 L965 13 L965 18 L963 18Z" fill="rgb(203, 105, 64)"/><path d="M702 8 L708 7 L707 12 L703 10Z" fill="rgb(91, 105, 123)"/><path d="M479 10 L484 10 L482 15 L478 13Z" fill="rgb(33, 26, 24)"/><path d="M178 10 L180 11 L180 16 L180 14Z" fill="rgb(38, 30, 27)"/><path d="M523 16 L525 17 L525 20 L523 20Z" fill="rgb(28, 22, 20)"/><path d="M635 9 L639 9 L640 12 L636 12Z" fill="rgb(79, 92, 108)"/><path d="M121 7 L128 8 L126 11 L121 10Z" fill="rgb(34, 27, 24)"/><path d="M1222 6 L1228 7 L1230 8 L1222 7Z" fill="rgb(68, 82, 102)"/><path d="M1098 12 L1105 12 L1103 18 L1098 17Z" fill="rgb(110, 127, 150)"/><path d="M231 3 L238 4 L233 6 L230 6Z" fill="rgb(40, 32, 29)"/><path d="M376 12 L380 13 L378 18 L376 17Z" fill="rgb(28, 22, 20)"/><path d="M326 12 L333 11 L330 16 L327 14Z" fill="rgb(37, 29, 26)"/><path d="M123 3 L131 2 L125 7 L124 6Z" fill="rgb(37, 29, 26)"/><path d="M878 6 L882 7 L880 8 L878 8Z" fill="rgb(99, 47, 30)"/><path d="M67 16 L75 16 L70 20 L69 19Z" fill="rgb(38, 30, 28)"/><path d="M386 16 L391 16 L391 20 L385 19Z" fill="rgb(45, 36, 33)"/><path d="M882 4 L890 3 L885 8 L881 6Z" fill="rgb(112, 54, 35)"/><path d="M1192 5 L1194 5 L1193 9 L1191 9Z" fill="rgb(72, 87, 106)"/><path d="M431 4 L433 5 L433 7 L430 7Z" fill="rgb(30, 23, 21)"/><path d="M114 5 L116 5 L115 8 L113 8Z" fill="rgb(46, 37, 33)"/><path d="M462 17 L468 17 L466 21 L463 20Z" fill="rgb(30, 23, 21)"/><path d="M1104 11 L1106 11 L1105 15 L1104 14Z" fill="rgb(49, 62, 80)"/><path d="M332 14 L337 14 L334 18 L331 18Z" fill="rgb(33, 26, 24)"/><path d="M394 12 L399 12 L396 15 L393 14Z" fill="rgb(28, 22, 20)"/><path d="M155 13 L159 14 L159 18 L153 16Z" fill="rgb(31, 25, 22)"/><path d="M36 12 L40 13 L39 16 L38 15Z" fill="rgb(40, 32, 29)"/><path d="M772 3 L780 2 L775 8 L770 6Z" fill="rgb(29, 36, 46)"/><path d="M372 7 L375 8 L375 11 L373 10Z" fill="rgb(28, 22, 20)"/><path d="M534 12 L535 12 L534 18 L535 17Z" fill="rgb(32, 26, 23)"/><path d="M58 4 L66 5 L61 7 L59 6Z" fill="rgb(28, 22, 20)"/><path d="M917 15 L919 16 L919 21 L918 20Z" fill="rgb(109, 52, 34)"/><path d="M771 8 L776 9 L774 12 L772 10Z" fill="rgb(27, 33, 43)"/><path d="M862 15 L867 15 L865 20 L860 18Z" fill="rgb(107, 51, 33)"/><path d="M505 4 L508 3 L507 8 L505 7Z" fill="rgb(32, 25, 23)"/><path d="M1148 6 L1155 6 L1156 8 L1148 8Z" fill="rgb(43, 54, 72)"/><path d="M208 12 L213 11 L210 17 L207 15Z" fill="rgb(39, 31, 28)"/><path d="M74 5 L78 5 L79 9 L73 7Z" fill="rgb(30, 23, 21)"/><path d="M88 0 L95 1 L94 2 L87 2Z" fill="rgb(51, 41, 37)"/><path d="M533 3 L535 4 L535 9 L533 7Z" fill="rgb(37, 30, 27)"/><path d="M302 2 L307 2 L308 8 L303 8Z" fill="rgb(28, 22, 20)"/><path d="M207 14 L211 15 L211 17 L206 16Z" fill="rgb(46, 37, 33)"/><path d="M453 15 L455 16 L455 19 L455 19Z" fill="rgb(30, 24, 22)"/><path d="M607 9 L609 9 L608 13 L606 13Z" fill="rgb(31, 38, 49)"/><path d="M110 1 L112 1 L113 5 L111 4Z" fill="rgb(34, 27, 25)"/><path d="M348 12 L351 12 L352 15 L349 14Z" fill="rgb(36, 29, 26)"/><path d="M363 8 L365 8 L366 10 L365 10Z" fill="rgb(38, 30, 27)"/><path d="M1062 18 L1066 18 L1067 23 L1061 22Z" fill="rgb(133, 152, 177)"/><path d="M1169 9 L1173 8 L1171 12 L1170 11Z" fill="rgb(84, 99, 120)"/><path d="M105 12 L110 12 L108 15 L103 14Z" fill="rgb(33, 26, 24)"/><path d="M1092 10 L1097 10 L1096 13 L1092 12Z" fill="rgb(28, 38, 55)"/><path d="M278 10 L281 10 L280 14 L278 14Z" fill="rgb(28, 22, 20)"/><path d="M676 13 L678 12 L678 19 L675 16Z" fill="rgb(87, 101, 119)"/><path d="M1178 10 L1180 10 L1180 15 L1176 14Z" fill="rgb(103, 119, 142)"/><path d="M262 5 L266 6 L265 11 L263 11Z" fill="rgb(42, 33, 30)"/><path d="M206 13 L214 13 L211 18 L207 18Z" fill="rgb(32, 25, 23)"/><path d="M886 1 L888 0 L888 5 L886 3Z" fill="rgb(150, 76, 47)"/><path d="M237 8 L240 7 L243 10 L236 10Z" fill="rgb(46, 37, 33)"/><path d="M356 12 L358 13 L359 18 L358 15Z" fill="rgb(33, 26, 24)"/><path d="M420 3 L425 2 L428 8 L421 6Z" fill="rgb(36, 29, 26)"/><path d="M584 3 L588 2 L586 8 L583 8Z" fill="rgb(46, 37, 33)"/><path d="M723 1 L727 1 L726 4 L721 4Z" fill="rgb(32, 39, 50)"/><path d="M410 0 L415 1 L414 2 L409 2Z" fill="rgb(35, 28, 25)"/><path d="M322 10 L327 10 L330 16 L323 16Z" fill="rgb(37, 29, 26)"/><path d="M777 11 L781 12 L780 17 L776 16Z" fill="rgb(46, 55, 67)"/><path d="M907 9 L911 8 L910 13 L907 13Z" fill="rgb(155, 78, 49)"/><path d="M591 7 L593 6 L594 10 L591 9Z" fill="rgb(30, 24, 22)"/><path d="M698 5 L699 6 L700 8 L700 7Z" fill="rgb(32, 39, 50)"/><path d="M1130 11 L1134 10 L1133 15 L1130 14Z" fill="rgb(26, 36, 53)"/><path d="M83 9 L85 8 L85 11 L84 10Z" fill="rgb(48, 39, 35)"/><path d="M490 4 L496 4 L499 8 L491 6Z" fill="rgb(39, 31, 28)"/><path d="M993 16 L996 17 L996 18 L995 17Z" fill="rgb(115, 56, 36)"/><path d="M401 13 L404 13 L404 18 L399 17Z" fill="rgb(40, 32, 29)"/><path d="M410 9 L413 10 L413 12 L412 11Z" fill="rgb(39, 31, 28)"/><path d="M753 13 L755 14 L754 15 L755 15Z" fill="rgb(43, 52, 64)"/><path d="M661 11 L666 11 L664 15 L662 14Z" fill="rgb(64, 75, 90)"/><path d="M952 6 L958 6 L962 9 L951 7Z" fill="rgb(178, 91, 56)"/><path d="M584 12 L587 12 L586 18 L582 15Z" fill="rgb(44, 35, 32)"/><path d="M74 9 L76 8 L75 15 L75 15Z" fill="rgb(37, 30, 27)"/><path d="M199 1 L202 1 L201 6 L200 5Z" fill="rgb(44, 35, 32)"/><path d="M397 16 L404 16 L404 18 L396 18Z" fill="rgb(28, 22, 20)"/><path d="M503 17 L507 16 L507 19 L502 18Z" fill="rgb(50, 40, 36)"/><path d="M931 12 L939 11 L940 14 L933 13Z" fill="rgb(111, 53, 34)"/><path d="M922 15 L927 14 L926 18 L923 17Z" fill="rgb(109, 52, 34)"/><path d="M711 16 L719 17 L715 19 L712 19Z" fill="rgb(35, 42, 53)"/><path d="M365 0 L375 -0 L373 2 L364 1Z" fill="rgb(28, 22, 20)"/><path d="M838 2 L847 3 L841 6 L837 6Z" fill="rgb(44, 52, 65)"/><path d="M846 1 L848 -0 L850 4 L845 4Z" fill="rgb(59, 70, 84)"/><path d="M148 9 L152 8 L152 11 L148 10Z" fill="rgb(29, 23, 20)"/><path d="M434 9 L439 10 L438 11 L433 10Z" fill="rgb(49, 39, 35)"/><path d="M325 1 L329 1 L327 5 L325 4Z" fill="rgb(28, 22, 20)"/><path d="M667 10 L676 10 L673 15 L667 15Z" fill="rgb(79, 92, 109)"/><path d="M475 7 L477 7 L478 13 L474 12Z" fill="rgb(34, 27, 24)"/><path d="M463 4 L465 5 L464 10 L463 8Z" fill="rgb(30, 23, 21)"/><path d="M793 10 L801 11 L799 11 L793 11Z" fill="rgb(42, 50, 62)"/><path d="M288 11 L291 11 L291 16 L288 14Z" fill="rgb(43, 34, 31)"/><path d="M772 10 L778 10 L777 12 L772 12Z" fill="rgb(35, 43, 54)"/><path d="M271 3 L276 3 L274 6 L270 6Z" fill="rgb(49, 39, 36)"/><path d="M565 12 L570 11 L573 17 L566 15Z" fill="rgb(46, 37, 33)"/><path d="M189 5 L192 4 L191 10 L188 10Z" fill="rgb(28, 22, 20)"/><path d="M853 8 L858 8 L857 13 L853 11Z" fill="rgb(57, 67, 81)"/><path d="M455 6 L457 5 L456 9 L456 8Z" fill="rgb(33, 26, 24)"/><path d="M398 4 L400 4 L399 9 L399 8Z" fill="rgb(46, 37, 33)"/><path d="M456 1 L459 1 L460 5 L457 4Z" fill="rgb(35, 27, 25)"/><path d="M473 10 L476 10 L476 16 L472 14Z" fill="rgb(49, 39, 36)"/><path d="M928 7 L933 6 L932 12 L928 11Z" fill="rgb(139, 69, 44)"/><path d="M1030 7 L1037 7 L1038 11 L1031 10Z" fill="rgb(132, 65, 41)"/><path d="M493 1 L499 -0 L496 6 L491 5Z" fill="rgb(41, 33, 30)"/><path d="M125 2 L130 2 L129 3 L123 3Z" fill="rgb(43, 35, 31)"/><path d="M513 11 L518 10 L518 16 L511 16Z" fill="rgb(51, 41, 37)"/><path d="M337 5 L340 5 L339 10 L335 8Z" fill="rgb(32, 25, 23)"/><path d="M1064 14 L1066 15 L1066 17 L1063 16Z" fill="rgb(115, 133, 157)"/><path d="M716 7 L719 6 L718 12 L716 11Z" fill="rgb(93, 108, 126)"/><path d="M693 6 L700 6 L699 9 L693 9Z" fill="rgb(39, 47, 58)"/><path d="M546 16 L549 17 L548 20 L546 18Z" fill="rgb(28, 22, 20)"/><path d="M1132 10 L1137 10 L1134 15 L1133 13Z" fill="rgb(107, 124, 146)"/><path d="M1126 4 L1129 4 L1128 9 L1125 9Z" fill="rgb(27, 38, 54)"/><path d="M842 3 L849 2 L845 4 L842 4Z" fill="rgb(27, 33, 43)"/><path d="M688 3 L690 3 L692 8 L687 6Z" fill="rgb(107, 124, 144)"/><path d="M466 12 L471 12 L470 13 L467 13Z" fill="rgb(30, 24, 21)"/><path d="M1017 2 L1024 2 L1022 8 L1018 6Z" fill="rgb(205, 106, 65)"/><path d="M1141 2 L1148 1 L1144 6 L1140 6Z" fill="rgb(63, 76, 95)"/><path d="M1037 4 L1040 4 L1039 8 L1038 6Z" fill="rgb(205, 106, 65)"/><path d="M409 8 L416 8 L412 10 L409 9Z" fill="rgb(30, 24, 22)"/><path d="M677 14 L681 13 L681 16 L675 15Z" fill="rgb(69, 80, 96)"/><path d="M433 7 L436 6 L436 9 L434 8Z" fill="rgb(40, 32, 29)"/><path d="M183 2 L185 1 L185 5 L182 5Z" fill="rgb(47, 38, 34)"/><path d="M622 7 L625 6 L627 9 L622 9Z" fill="rgb(34, 41, 52)"/><path d="M19 17 L26 16 L25 21 L17 20Z" fill="rgb(36, 28, 26)"/><path d="M38 7 L40 7 L40 13 L38 12Z" fill="rgb(36, 29, 26)"/><path d="M872 1 L876 1 L877 7 L873 5Z" fill="rgb(105, 50, 33)"/><path d="M995 8 L996 8 L995 14 L994 13Z" fill="rgb(204, 106, 65)"/><path d="M833 3 L835 2 L836 5 L835 5Z" fill="rgb(44, 53, 65)"/><path d="M589 9 L596 8 L595 14 L590 13Z" fill="rgb(44, 35, 32)"/><path d="M113 13 L116 13 L115 19 L115 19Z" fill="rgb(32, 26, 23)"/><path d="M1110 13 L1116 14 L1117 18 L1112 16Z" fill="rgb(112, 129, 152)"/><path d="M1179 10 L1182 9 L1182 15 L1178 13Z" fill="rgb(130, 149, 174)"/><path d="M562 4 L570 4 L570 9 L563 8Z" fill="rgb(36, 28, 26)"/><path d="M1155 15 L1158 15 L1157 19 L1157 19Z" fill="rgb(54, 66, 84)"/><path d="M6 9 L8 9 L7 14 L5 12Z" fill="rgb(28, 22, 20)"/><path d="M434 15 L437 16 L437 17 L435 17Z" fill="rgb(39, 31, 28)"/><path d="M148 12 L154 13 L153 15 L147 14Z" fill="rgb(28, 22, 20)"/><path d="M749 16 L753 17 L751 22 L750 19Z" fill="rgb(49, 58, 71)"/><path d="M647 0 L656 -0 L652 4 L645 3Z" fill="rgb(32, 39, 50)"/><path d="M1058 9 L1066 8 L1065 15 L1058 15Z" fill="rgb(50, 63, 81)"/><path d="M444 12 L448 13 L447 16 L443 16Z" fill="rgb(40, 32, 29)"/><path d="M70 15 L76 16 L75 19 L71 17Z" fill="rgb(41, 33, 30)"/><path d="M399 2 L406 3 L402 5 L399 4Z" fill="rgb(50, 40, 36)"/><path d="M787 5 L790 6 L790 9 L788 8Z" fill="rgb(88, 102, 120)"/><path d="M467 17 L471 17 L473 20 L468 19Z" fill="rgb(42, 33, 30)"/><path d="M172 9 L174 9 L173 14 L171 13Z" fill="rgb(47, 38, 34)"/><path d="M1186 17 L1189 17 L1189 23 L1185 21Z" fill="rgb(33, 44, 60)"/><path d="M483 7 L487 7 L487 9 L484 9Z" fill="rgb(50, 40, 37)"/><path d="M386 3 L391 3 L389 7 L386 7Z" fill="rgb(43, 35, 31)"/><path d="M650 5 L652 6 L652 10 L649 10Z" fill="rgb(73, 85, 101)"/><path d="M326 4 L331 4 L331 9 L324 8Z" fill="rgb(28, 22, 20)"/><path d="M791 17 L796 18 L797 22 L791 21Z" fill="rgb(73, 85, 101)"/><path d="M989 6 L995 7 L997 10 L987 9Z" fill="rgb(100, 47, 31)"/><path d="M81 7 L88 7 L87 12 L80 12Z" fill="rgb(36, 29, 26)"/><path d="M967 15 L973 16 L974 20 L968 20Z" fill="rgb(97, 46, 30)"/><path d="M796 16 L802 15 L799 20 L797 20Z" fill="rgb(30, 37, 47)"/><path d="M335 4 L338 4 L337 8 L336 6Z" fill="rgb(30, 24, 21)"/><path d="M1029 6 L1033 5 L1033 8 L1029 8Z" fill="rgb(90, 42, 28)"/><path d="M49 15 L51 15 L51 19 L47 19Z" fill="rgb(28, 22, 20)"/><path d="M256 15 L262 14 L261 17 L256 16Z" fill="rgb(45, 36, 33)"/><path d="M773 13 L777 12 L778 17 L775 16Z" fill="rgb(68, 79, 94)"/><path d="M1180 6 L1181 6 L1182 10 L1180 9Z" fill="rgb(137, 157, 182)"/><path d="M419 3 L423 3 L422 6 L418 5Z" fill="rgb(34, 27, 24)"/><path d="M241 5 L248 6 L249 11 L242 10Z" fill="rgb(38, 30, 27)"/><path d="M77 4 L84 3 L82 8 L76 8Z" fill="rgb(28, 22, 20)"/><path d="M1217 6 L1220 6 L1219 9 L1215 7Z" fill="rgb(25, 35, 51)"/><path d="M189 14 L198 14 L197 20 L187 17Z" fill="rgb(35, 28, 25)"/><path d="M691 9 L695 10 L695 11 L693 10Z" fill="rgb(35, 42, 53)"/><path d="M899 7 L903 6 L905 9 L898 8Z" fill="rgb(185, 95, 58)"/><path d="M1019 14 L1021 13 L1020 20 L1019 19Z" fill="rgb(131, 65, 41)"/><path d="M595 12 L597 11 L597 17 L593 15Z" fill="rgb(30, 23, 21)"/><path d="M560 11 L564 11 L563 14 L560 13Z" fill="rgb(40, 32, 29)"/><path d="M826 13 L831 12 L832 17 L826 15Z" fill="rgb(37, 44, 55)"/><path d="M293 18 L297 18 L297 23 L291 21Z" fill="rgb(30, 24, 21)"/><path d="M1198 14 L1200 14 L1200 17 L1199 17Z" fill="rgb(24, 34, 51)"/><path d="M1128 5 L1129 6 L1130 10 L1127 9Z" fill="rgb(30, 41, 58)"/><path d="M200 9 L208 8 L207 15 L200 14Z" fill="rgb(28, 22, 20)"/><path d="M617 11 L621 11 L621 13 L616 12Z" fill="rgb(69, 80, 96)"/><path d="M914 0 L919 1 L918 4 L914 2Z" fill="rgb(188, 97, 59)"/><path d="M1198 10 L1201 11 L1199 15 L1198 13Z" fill="rgb(48, 60, 78)"/><path d="M935 3 L940 2 L939 8 L936 7Z" fill="rgb(151, 76, 47)"/><path d="M638 8 L645 9 L644 13 L640 12Z" fill="rgb(50, 59, 72)"/><path d="M879 1 L888 -0 L888 4 L879 3Z" fill="rgb(163, 83, 51)"/><path d="M310 5 L313 6 L313 7 L312 7Z" fill="rgb(32, 26, 23)"/><path d="M1027 18 L1030 17 L1029 21 L1028 20Z" fill="rgb(174, 89, 55)"/><path d="M403 14 L410 13 L411 19 L403 18Z" fill="rgb(44, 35, 32)"/><path d="M450 10 L453 10 L454 14 L450 13Z" fill="rgb(50, 40, 37)"/><path d="M846 17 L850 16 L848 20 L847 20Z" fill="rgb(28, 34, 45)"/><path d="M216 8 L223 7 L220 13 L214 12Z" fill="rgb(41, 33, 30)"/><path d="M257 5 L263 5 L262 9 L256 7Z" fill="rgb(50, 40, 37)"/><path d="M82 0 L84 1 L85 2 L81 2Z" fill="rgb(33, 26, 23)"/><path d="M218 2 L222 2 L220 6 L220 5Z" fill="rgb(32, 25, 23)"/><path d="M1021 1 L1025 1 L1023 6 L1019 4Z" fill="rgb(188, 97, 59)"/><path d="M1110 3 L1114 2 L1113 7 L1112 6Z" fill="rgb(86, 101, 122)"/><path d="M800 10 L803 10 L803 12 L800 12Z" fill="rgb(35, 43, 54)"/><path d="M170 14 L173 14 L174 18 L169 17Z" fill="rgb(31, 24, 22)"/><path d="M938 4 L941 4 L941 7 L940 6Z" fill="rgb(101, 48, 31)"/><path d="M814 15 L816 15 L816 19 L813 17Z" fill="rgb(36, 44, 55)"/><path d="M588 3 L591 3 L592 5 L590 5Z" fill="rgb(30, 24, 21)"/><path d="M88 4 L94 5 L90 9 L90 8Z" fill="rgb(43, 34, 31)"/><path d="M294 3 L296 4 L296 5 L295 4Z" fill="rgb(47, 38, 34)"/><path d="M556 6 L560 7 L561 9 L555 7Z" fill="rgb(30, 23, 21)"/><path d="M801 9 L806 9 L805 14 L802 13Z" fill="rgb(26, 32, 42)"/><path d="M178 14 L183 15 L181 20 L177 19Z" fill="rgb(50, 40, 36)"/><path d="M1106 1 L1108 1 L1108 5 L1107 5Z" fill="rgb(35, 46, 63)"/><path d="M493 12 L500 12 L502 15 L493 15Z" fill="rgb(28, 22, 20)"/><path d="M762 4 L765 3 L766 10 L762 8Z" fill="rgb(97, 112, 131)"/><path d="M421 12 L426 11 L425 14 L420 14Z" fill="rgb(28, 22, 20)"/><path d="M689 13 L693 12 L691 15 L690 14Z" fill="rgb(30, 37, 48)"/><path d="M1088 1 L1090 1 L1091 5 L1088 5Z" fill="rgb(37, 48, 65)"/><path d="M1174 5 L1179 4 L1176 7 L1173 6Z" fill="rgb(130, 149, 173)"/><path d="M1186 16 L1192 16 L1190 21 L1185 19Z" fill="rgb(55, 68, 86)"/><path d="M808 11 L813 10 L816 16 L808 14Z" fill="rgb(93, 107, 126)"/><path d="M849 5 L853 4 L853 8 L850 7Z" fill="rgb(36, 44, 55)"/><path d="M825 14 L830 15 L827 19 L827 18Z" fill="rgb(26, 32, 42)"/><path d="M286 8 L289 9 L287 11 L287 10Z" fill="rgb(50, 40, 36)"/><path d="M814 14 L816 13 L815 16 L814 16Z" fill="rgb(30, 36, 47)"/><path d="M95 10 L101 10 L98 14 L95 12Z" fill="rgb(49, 40, 36)"/><path d="M829 3 L838 3 L837 8 L830 8Z" fill="rgb(47, 55, 68)"/><path d="M241 14 L244 14 L245 19 L241 17Z" fill="rgb(31, 25, 22)"/><path d="M18 10 L21 9 L22 11 L16 11Z" fill="rgb(42, 34, 31)"/><path d="M325 13 L327 14 L326 15 L325 14Z" fill="rgb(51, 41, 37)"/><path d="M393 8 L395 7 L394 9 L393 9Z" fill="rgb(35, 28, 25)"/><path d="M323 14 L325 15 L326 18 L321 16Z" fill="rgb(42, 34, 31)"/><path d="M850 7 L853 6 L853 12 L849 11Z" fill="rgb(83, 96, 113)"/><path d="M987 14 L989 14 L988 19 L987 17Z" fill="rgb(104, 50, 32)"/><path d="M778 4 L783 3 L782 8 L777 7Z" fill="rgb(38, 45, 57)"/><path d="M785 12 L791 13 L789 15 L784 14Z" fill="rgb(71, 83, 98)"/><path d="M946 15 L953 15 L954 20 L945 19Z" fill="rgb(168, 86, 53)"/><path d="M109 1 L112 1 L111 7 L108 5Z" fill="rgb(36, 29, 26)"/><path d="M640 7 L643 6 L643 12 L640 10Z" fill="rgb(82, 96, 113)"/><path d="M820 4 L825 4 L824 9 L822 9Z" fill="rgb(42, 51, 63)"/><path d="M759 2 L763 3 L766 5 L758 4Z" fill="rgb(54, 64, 78)"/><path d="M760 5 L766 5 L765 10 L758 10Z" fill="rgb(27, 33, 44)"/><path d="M63 5 L65 5 L65 7 L64 6Z" fill="rgb(44, 35, 32)"/><path d="M213 14 L216 15 L215 16 L212 16Z" fill="rgb(34, 27, 25)"/><path d="M1094 16 L1100 16 L1102 20 L1095 19Z" fill="rgb(61, 74, 93)"/><path d="M238 17 L243 17 L243 20 L240 19Z" fill="rgb(28, 22, 20)"/><path d="M1049 6 L1053 6 L1055 9 L1050 8Z" fill="rgb(32, 43, 59)"/><path d="M13 14 L19 14 L21 20 L12 18Z" fill="rgb(39, 31, 28)"/><path d="M460 6 L462 6 L462 9 L461 9Z" fill="rgb(33, 26, 24)"/><path d="M300 17 L309 17 L305 21 L300 20Z" fill="rgb(45, 36, 32)"/><path d="M1030 2 L1033 3 L1035 8 L1032 5Z" fill="rgb(141, 70, 44)"/><path d="M1151 13 L1158 13 L1156 15 L1151 15Z" fill="rgb(88, 104, 125)"/><path d="M960 16 L962 15 L961 18 L961 17Z" fill="rgb(102, 49, 32)"/><path d="M87 1 L89 2 L90 5 L86 4Z" fill="rgb(43, 34, 31)"/><path d="M1098 8 L1105 9 L1101 11 L1098 11Z" fill="rgb(122, 141, 165)"/><path d="M636 9 L642 8 L641 13 L638 13Z" fill="rgb(51, 60, 73)"/><path d="M153 16 L159 16 L156 20 L153 20Z" fill="rgb(28, 22, 20)"/><path d="M968 6 L973 7 L976 12 L968 10Z" fill="rgb(103, 49, 32)"/><path d="M871 17 L875 16 L874 20 L871 19Z" fill="rgb(101, 48, 31)"/><path d="M176 17 L180 18 L180 22 L177 22Z" fill="rgb(51, 41, 37)"/><path d="M444 17 L446 17 L446 20 L444 20Z" fill="rgb(30, 23, 21)"/><path d="M687 3 L694 2 L691 6 L687 5Z" fill="rgb(73, 85, 101)"/><path d="M575 2 L579 1 L577 6 L575 4Z" fill="rgb(28, 22, 20)"/><path d="M740 16 L746 17 L745 21 L739 21Z" fill="rgb(34, 41, 52)"/><path d="M1135 1 L1138 2 L1139 3 L1134 2Z" fill="rgb(130, 149, 173)"/><path d="M784 18 L789 17 L788 21 L784 20Z" fill="rgb(44, 52, 64)"/><path d="M199 4 L201 3 L201 7 L198 7Z" fill="rgb(28, 22, 20)"/><path d="M597 17 L599 16 L598 21 L597 21Z" fill="rgb(35, 28, 25)"/><path d="M495 6 L498 6 L499 11 L495 9Z" fill="rgb(34, 27, 24)"/><path d="M1042 13 L1047 13 L1046 19 L1043 18Z" fill="rgb(117, 57, 36)"/><path d="M902 17 L906 17 L906 22 L901 22Z" fill="rgb(97, 46, 30)"/><path d="M674 7 L677 6 L676 13 L674 11Z" fill="rgb(33, 40, 51)"/><path d="M446 16 L451 16 L449 22 L445 21Z" fill="rgb(32, 26, 23)"/><path d="M964 5 L969 5 L967 8 L964 8Z" fill="rgb(119, 58, 37)"/><path d="M197 12 L200 12 L198 14 L195 14Z" fill="rgb(28, 22, 20)"/><path d="M900 13 L909 12 L909 17 L900 15Z" fill="rgb(202, 105, 64)"/><path d="M918 15 L920 16 L921 21 L916 18Z" fill="rgb(121, 59, 38)"/><path d="M152 0 L157 -0 L158 2 L153 2Z" fill="rgb(42, 33, 30)"/><path d="M443 18 L446 19 L448 20 L443 19Z" fill="rgb(34, 27, 25)"/><path d="M221 3 L227 3 L223 5 L220 4Z" fill="rgb(32, 26, 23)"/><path d="M706 8 L711 9 L713 11 L708 10Z" fill="rgb(103, 119, 139)"/><path d="M175 3 L182 4 L180 5 L173 5Z" fill="rgb(33, 26, 24)"/><path d="M508 12 L516 13 L516 15 L509 14Z" fill="rgb(38, 30, 27)"/><path d="M462 5 L470 6 L469 10 L461 9Z" fill="rgb(48, 39, 35)"/><path d="M322 11 L327 12 L325 15 L324 14Z" fill="rgb(29, 23, 21)"/><path d="M183 14 L190 15 L186 18 L184 16Z" fill="rgb(38, 30, 27)"/><path d="M339 2 L343 3 L344 7 L338 6Z" fill="rgb(47, 38, 34)"/><path d="M886 4 L890 5 L890 7 L885 6Z" fill="rgb(158, 80, 50)"/><path d="M992 14 L1001 14 L995 17 L993 16Z" fill="rgb(130, 64, 40)"/><path d="M834 1 L837 1 L837 6 L833 5Z" fill="rgb(118, 136, 157)"/><path d="M41 9 L45 9 L46 14 L42 13Z" fill="rgb(28, 22, 20)"/><path d="M421 17 L423 16 L423 22 L420 20Z" fill="rgb(29, 23, 21)"/><path d="M1141 9 L1143 9 L1144 14 L1143 13Z" fill="rgb(104, 121, 144)"/><path d="M774 10 L779 10 L778 12 L775 11Z" fill="rgb(100, 115, 135)"/><path d="M568 15 L576 15 L574 17 L567 16Z" fill="rgb(50, 40, 36)"/><path d="M577 9 L581 9 L579 13 L579 12Z" fill="rgb(31, 24, 22)"/><path d="M1178 18 L1182 18 L1181 24 L1176 21Z" fill="rgb(30, 40, 57)"/><path d="M152 5 L158 5 L158 11 L153 10Z" fill="rgb(39, 31, 28)"/><path d="M1058 12 L1065 12 L1065 15 L1057 13Z" fill="rgb(49, 61, 79)"/><path d="M679 4 L681 4 L682 9 L681 8Z" fill="rgb(59, 70, 84)"/><path d="M875 0 L879 0 L877 6 L875 6Z" fill="rgb(91, 42, 28)"/><path d="M723 15 L727 14 L727 17 L722 17Z" fill="rgb(26, 32, 42)"/><path d="M633 6 L635 6 L638 10 L631 10Z" fill="rgb(115, 132, 154)"/><path d="M332 3 L339 4 L337 8 L332 6Z" fill="rgb(33, 26, 23)"/><path d="M891 10 L896 9 L895 13 L891 12Z" fill="rgb(117, 57, 37)"/><path d="M196 9 L201 8 L199 12 L196 11Z" fill="rgb(38, 30, 27)"/><path d="M929 4 L932 4 L931 6 L930 6Z" fill="rgb(187, 96, 59)"/><path d="M822 15 L827 14 L824 21 L820 19Z" fill="rgb(54, 64, 77)"/><path d="M109 12 L113 11 L111 15 L108 14Z" fill="rgb(34, 27, 24)"/><path d="M1116 13 L1118 13 L1119 14 L1115 14Z" fill="rgb(56, 69, 87)"/><path d="M72 9 L74 9 L73 14 L72 13Z" fill="rgb(32, 25, 23)"/><path d="M811 2 L813 1 L812 4 L812 4Z" fill="rgb(106, 122, 143)"/><path d="M411 5 L414 5 L413 8 L409 7Z" fill="rgb(41, 32, 29)"/><path d="M1215 17 L1219 17 L1219 20 L1217 19Z" fill="rgb(27, 37, 54)"/><path d="M1146 15 L1148 15 L1148 18 L1146 18Z" fill="rgb(61, 75, 93)"/><path d="M55 13 L57 13 L58 16 L55 15Z" fill="rgb(45, 36, 32)"/><path d="M450 13 L455 12 L458 16 L451 16Z" fill="rgb(31, 24, 22)"/><path d="M191 16 L193 15 L192 19 L190 19Z" fill="rgb(42, 34, 30)"/><path d="M1223 6 L1229 7 L1229 11 L1224 10Z" fill="rgb(124, 143, 166)"/><path d="M241 9 L245 10 L243 13 L240 12Z" fill="rgb(36, 28, 26)"/><path d="M618 8 L620 8 L621 11 L619 10Z" fill="rgb(76, 89, 105)"/><path d="M305 17 L309 17 L310 19 L305 19Z" fill="rgb(36, 29, 26)"/><path d="M261 8 L265 9 L263 11 L260 11Z" fill="rgb(33, 26, 23)"/><path d="M803 12 L807 12 L806 15 L805 14Z" fill="rgb(73, 85, 101)"/><path d="M822 17 L824 18 L825 20 L822 19Z" fill="rgb(93, 108, 127)"/><path d="M331 9 L340 9 L337 14 L330 14Z" fill="rgb(42, 34, 30)"/><path d="M225 3 L231 4 L234 8 L225 6Z" fill="rgb(31, 24, 22)"/><path d="M948 7 L955 7 L953 10 L946 9Z" fill="rgb(95, 45, 29)"/><path d="M465 0 L472 0 L469 3 L463 3Z" fill="rgb(33, 26, 24)"/><path d="M750 5 L755 5 L756 11 L749 8Z" fill="rgb(34, 41, 52)"/><path d="M399 12 L403 11 L403 14 L399 14Z" fill="rgb(39, 31, 28)"/><path d="M142 18 L149 18 L145 20 L144 20Z" fill="rgb(30, 24, 22)"/><path d="M330 14 L337 13 L338 16 L331 16Z" fill="rgb(35, 28, 25)"/><path d="M673 7 L675 7 L676 10 L671 9Z" fill="rgb(93, 107, 126)"/><path d="M261 0 L263 0 L262 3 L262 2Z" fill="rgb(28, 22, 20)"/><path d="M1205 3 L1210 2 L1210 6 L1204 5Z" fill="rgb(66, 79, 99)"/><path d="M754 10 L756 9 L756 16 L755 14Z" fill="rgb(40, 48, 59)"/><path d="M403 15 L407 15 L405 21 L404 20Z" fill="rgb(32, 25, 23)"/><path d="M548 7 L555 7 L554 11 L546 9Z" fill="rgb(30, 24, 22)"/><path d="M1179 12 L1182 12 L1183 16 L1179 15Z" fill="rgb(88, 103, 124)"/><path d="M791 2 L793 3 L792 6 L791 6Z" fill="rgb(71, 82, 98)"/><path d="M165 6 L171 6 L168 10 L165 9Z" fill="rgb(41, 33, 30)"/><path d="M695 14 L700 14 L697 19 L696 17Z" fill="rgb(46, 55, 67)"/><path d="M1146 17 L1148 18 L1149 23 L1144 23Z" fill="rgb(96, 112, 133)"/><path d="M540 15 L544 16 L543 20 L538 19Z" fill="rgb(41, 33, 30)"/><path d="M81 1 L83 1 L84 4 L83 3Z" fill="rgb(39, 31, 28)"/><path d="M1214 8 L1218 8 L1216 14 L1213 13Z" fill="rgb(106, 123, 145)"/><path d="M678 11 L680 12 L679 16 L676 16Z" fill="rgb(101, 116, 136)"/><path d="M345 13 L348 13 L347 18 L347 17Z" fill="rgb(46, 37, 33)"/><path d="M626 9 L633 9 L629 14 L625 13Z" fill="rgb(26, 32, 42)"/><path d="M807 7 L810 7 L810 13 L806 12Z" fill="rgb(61, 72, 86)"/><path d="M433 15 L437 14 L436 19 L432 18Z" fill="rgb(28, 22, 20)"/><path d="M2 14 L9 15 L6 18 L3 17Z" fill="rgb(31, 24, 22)"/><path d="M1059 14 L1066 15 L1062 18 L1057 17Z" fill="rgb(88, 104, 125)"/><path d="M625 3 L630 2 L632 6 L624 5Z" fill="rgb(35, 43, 54)"/><path d="M660 8 L668 7 L663 9 L661 9Z" fill="rgb(59, 69, 84)"/><path d="M660 4 L663 4 L663 9 L659 7Z" fill="rgb(90, 105, 123)"/><path d="M80 12 L83 11 L83 16 L82 14Z" fill="rgb(41, 33, 30)"/><path d="M305 2 L306 1 L306 5 L304 5Z" fill="rgb(31, 24, 22)"/><path d="M887 2 L888 2 L889 5 L889 4Z" fill="rgb(103, 49, 32)"/><path d="M45 14 L51 13 L54 17 L45 16Z" fill="rgb(34, 27, 24)"/><path d="M536 14 L540 15 L540 16 L537 16Z" fill="rgb(46, 37, 33)"/><path d="M566 10 L570 10 L572 16 L568 13Z" fill="rgb(30, 24, 22)"/><path d="M769 11 L773 12 L774 13 L768 13Z" fill="rgb(98, 114, 133)"/><path d="M806 12 L810 12 L808 15 L807 14Z" fill="rgb(26, 32, 42)"/><path d="M970 6 L977 5 L978 8 L968 7Z" fill="rgb(142, 71, 44)"/><path d="M452 3 L456 3 L455 7 L454 6Z" fill="rgb(33, 26, 24)"/><path d="M534 4 L538 4 L538 9 L533 7Z" fill="rgb(50, 41, 37)"/><path d="M52 8 L55 8 L53 12 L52 11Z" fill="rgb(47, 38, 34)"/><path d="M1152 16 L1155 16 L1158 20 L1151 19Z" fill="rgb(37, 48, 65)"/><path d="M872 1 L874 0 L873 4 L870 3Z" fill="rgb(205, 106, 65)"/><path d="M19 3 L21 3 L20 5 L21 4Z" fill="rgb(30, 24, 21)"/><path d="M309 4 L310 5 L310 9 L309 9Z" fill="rgb(46, 37, 33)"/><path d="M123 1 L128 1 L126 6 L123 4Z" fill="rgb(41, 33, 30)"/><path d="M719 5 L725 5 L722 7 L717 7Z" fill="rgb(39, 47, 58)"/><path d="M618 13 L622 14 L623 18 L620 18Z" fill="rgb(47, 56, 68)"/><path d="M316 15 L319 15 L318 21 L314 20Z" fill="rgb(39, 31, 28)"/><path d="M215 5 L218 4 L218 8 L214 7Z" fill="rgb(39, 31, 28)"/><path d="M797 12 L799 12 L799 18 L798 17Z" fill="rgb(26, 32, 43)"/><path d="M798 7 L804 8 L803 10 L800 9Z" fill="rgb(66, 77, 92)"/><path d="M1030 4 L1037 5 L1033 10 L1031 9Z" fill="rgb(173, 88, 54)"/><path d="M383 7 L391 6 L387 12 L384 10Z" fill="rgb(45, 36, 32)"/><path d="M413 2 L420 2 L420 4 L412 3Z" fill="rgb(29, 23, 21)"/><path d="M484 0 L489 -0 L486 2 L486 1Z" fill="rgb(34, 27, 25)"/><path d="M310 0 L316 -0 L314 5 L312 3Z" fill="rgb(28, 22, 20)"/><path d="M1214 16 L1222 17 L1221 18 L1214 17Z" fill="rgb(29, 39, 55)"/><path d="M189 10 L194 10 L194 12 L190 12Z" fill="rgb(31, 24, 22)"/><path d="M1131 15 L1134 14 L1134 20 L1132 20Z" fill="rgb(73, 87, 107)"/><path d="M792 12 L798 12 L797 15 L791 15Z" fill="rgb(111, 128, 149)"/><path d="M993 4 L998 4 L997 7 L994 7Z" fill="rgb(163, 83, 51)"/><path d="M547 14 L549 13 L549 20 L545 19Z" fill="rgb(40, 32, 29)"/><path d="M506 17 L513 17 L510 22 L506 21Z" fill="rgb(34, 27, 24)"/><path d="M792 9 L796 9 L794 15 L791 12Z" fill="rgb(43, 51, 63)"/><path d="M519 15 L527 15 L522 20 L518 18Z" fill="rgb(41, 33, 30)"/><path d="M762 1 L765 0 L766 5 L763 4Z" fill="rgb(63, 74, 89)"/><path d="M142 11 L147 12 L150 16 L141 16Z" fill="rgb(47, 38, 34)"/><path d="M1014 16 L1018 17 L1018 19 L1013 19Z" fill="rgb(106, 50, 33)"/><path d="M1139 10 L1142 10 L1144 16 L1140 16Z" fill="rgb(125, 144, 167)"/><path d="M765 9 L771 8 L768 13 L766 11Z" fill="rgb(73, 85, 101)"/><path d="M970 1 L975 0 L976 3 L970 3Z" fill="rgb(157, 80, 49)"/><path d="M399 11 L405 11 L404 16 L399 16Z" fill="rgb(50, 40, 36)"/><path d="M215 10 L221 10 L224 12 L213 12Z" fill="rgb(44, 35, 32)"/><path d="M487 10 L489 9 L489 13 L488 12Z" fill="rgb(49, 39, 36)"/><path d="M149 14 L152 14 L152 20 L151 18Z" fill="rgb(36, 29, 26)"/><path d="M1 16 L4 16 L4 21 L3 19Z" fill="rgb(46, 37, 33)"/><path d="M1023 17 L1030 17 L1027 21 L1022 20Z" fill="rgb(112, 54, 35)"/><path d="M166 15 L169 15 L169 20 L167 19Z" fill="rgb(48, 38, 35)"/><path d="M120 5 L124 4 L124 10 L122 8Z" fill="rgb(44, 35, 32)"/><path d="M90 14 L95 14 L97 15 L90 15Z" fill="rgb(28, 22, 20)"/><path d="M38 6 L46 6 L45 11 L37 9Z" fill="rgb(30, 24, 22)"/><path d="M359 5 L362 6 L362 8 L359 7Z" fill="rgb(43, 34, 31)"/><path d="M1131 17 L1135 16 L1133 22 L1131 22Z" fill="rgb(58, 71, 90)"/><path d="M192 8 L197 9 L195 11 L191 10Z" fill="rgb(51, 41, 37)"/><path d="M908 17 L911 17 L911 20 L910 20Z" fill="rgb(159, 81, 50)"/><path d="M1137 9 L1139 9 L1138 14 L1139 11Z" fill="rgb(133, 153, 177)"/><path d="M1040 15 L1048 15 L1045 17 L1039 17Z" fill="rgb(119, 58, 37)"/><path d="M897 2 L900 2 L900 5 L899 4Z" fill="rgb(215, 112, 68)"/><path d="M449 2 L453 3 L452 6 L448 5Z" fill="rgb(28, 22, 20)"/><path d="M211 17 L215 17 L215 20 L211 20Z" fill="rgb(38, 31, 28)"/><path d="M691 4 L694 5 L692 7 L692 6Z" fill="rgb(27, 33, 43)"/><path d="M660 10 L662 9 L662 14 L661 13Z" fill="rgb(26, 32, 43)"/><path d="M82 10 L85 9 L85 12 L83 11Z" fill="rgb(40, 32, 29)"/><path d="M547 4 L549 5 L549 9 L548 8Z" fill="rgb(29, 23, 21)"/><path d="M803 7 L805 7 L805 13 L801 11Z" fill="rgb(65, 76, 91)"/><path d="M283 15 L288 16 L286 21 L282 20Z" fill="rgb(28, 22, 20)"/><path d="M366 13 L374 14 L371 17 L368 15Z" fill="rgb(32, 26, 23)"/><path d="M1076 1 L1080 -0 L1081 6 L1077 5Z" fill="rgb(70, 84, 104)"/><path d="M600 1 L602 0 L603 4 L601 4Z" fill="rgb(89, 103, 121)"/><path d="M544 13 L547 14 L545 17 L543 16Z" fill="rgb(41, 32, 29)"/><path d="M118 6 L123 6 L123 9 L116 8Z" fill="rgb(42, 34, 31)"/><path d="M309 9 L315 10 L316 15 L309 13Z" fill="rgb(31, 24, 22)"/><path d="M1165 17 L1168 17 L1169 20 L1163 20Z" fill="rgb(24, 34, 50)"/><path d="M379 0 L381 -0 L381 3 L378 2Z" fill="rgb(48, 39, 35)"/><path d="M710 8 L715 8 L715 13 L711 12Z" fill="rgb(41, 49, 61)"/><path d="M584 6 L588 7 L592 10 L582 10Z" fill="rgb(29, 22, 20)"/><path d="M292 10 L296 9 L296 13 L292 13Z" fill="rgb(46, 37, 33)"/><path d="M230 13 L233 13 L232 15 L231 14Z" fill="rgb(28, 22, 20)"/><path d="M764 15 L767 16 L766 20 L764 20Z" fill="rgb(30, 36, 47)"/><path d="M422 17 L425 17 L425 21 L423 21Z" fill="rgb(48, 38, 35)"/><path d="M737 2 L740 1 L739 7 L737 6Z" fill="rgb(114, 131, 152)"/><path d="M53 17 L61 16 L59 20 L51 19Z" fill="rgb(33, 26, 24)"/><path d="M97 15 L102 16 L99 21 L98 21Z" fill="rgb(41, 33, 30)"/><path d="M743 0 L748 -0 L745 4 L745 3Z" fill="rgb(109, 126, 146)"/><path d="M50 2 L55 3 L57 5 L51 4Z" fill="rgb(51, 41, 37)"/><path d="M507 17 L512 16 L512 19 L509 19Z" fill="rgb(28, 22, 20)"/><path d="M52 13 L56 13 L54 15 L53 14Z" fill="rgb(36, 28, 26)"/><path d="M327 4 L333 4 L331 8 L329 7Z" fill="rgb(35, 28, 25)"/><path d="M20 6 L22 7 L22 9 L22 9Z" fill="rgb(32, 25, 23)"/><path d="M896 14 L902 14 L902 16 L894 15Z" fill="rgb(111, 54, 34)"/><path d="M1011 14 L1013 15 L1014 17 L1012 17Z" fill="rgb(215, 112, 68)"/><path d="M633 10 L639 10 L639 15 L633 13Z" fill="rgb(109, 125, 146)"/><path d="M523 8 L527 7 L526 11 L524 9Z" fill="rgb(34, 27, 25)"/><path d="M21 13 L25 12 L23 17 L22 17Z" fill="rgb(33, 26, 24)"/><path d="M351 8 L353 8 L352 14 L352 13Z" fill="rgb(32, 25, 23)"/><path d="M576 7 L584 6 L582 12 L578 12Z" fill="rgb(30, 24, 22)"/><path d="M563 3 L571 3 L568 4 L565 4Z" fill="rgb(28, 22, 20)"/><path d="M757 2 L762 2 L759 4 L755 4Z" fill="rgb(68, 79, 95)"/><path d="M703 6 L710 6 L711 8 L705 7Z" fill="rgb(53, 62, 76)"/><path d="M744 2 L748 1 L746 6 L744 5Z" fill="rgb(50, 59, 73)"/><path d="M376 11 L380 11 L381 14 L374 13Z" fill="rgb(48, 39, 35)"/><path d="M538 16 L540 16 L540 18 L539 18Z" fill="rgb(29, 23, 21)"/><path d="M583 7 L592 7 L592 11 L583 10Z" fill="rgb(44, 35, 32)"/><path d="M468 5 L476 5 L474 8 L467 7Z" fill="rgb(29, 22, 20)"/><path d="M413 12 L414 11 L414 17 L411 17Z" fill="rgb(37, 30, 27)"/><path d="M675 6 L678 6 L679 9 L676 8Z" fill="rgb(37, 45, 56)"/><path d="M802 2 L805 3 L805 5 L802 4Z" fill="rgb(26, 32, 43)"/><path d="M1205 14 L1206 14 L1205 19 L1205 18Z" fill="rgb(47, 59, 76)"/><path d="M1091 5 L1094 6 L1093 10 L1090 9Z" fill="rgb(27, 38, 54)"/><path d="M106 18 L111 18 L113 21 L105 20Z" fill="rgb(28, 22, 20)"/><path d="M772 12 L774 11 L774 17 L772 16Z" fill="rgb(60, 70, 85)"/><path d="M679 13 L685 12 L682 15 L678 14Z" fill="rgb(105, 121, 141)"/><path d="M959 2 L964 3 L967 7 L959 5Z" fill="rgb(110, 53, 34)"/><path d="M809 6 L810 6 L811 9 L809 8Z" fill="rgb(30, 37, 47)"/><path d="M982 2 L991 2 L988 7 L983 6Z" fill="rgb(114, 55, 35)"/><path d="M144 5 L151 5 L148 8 L145 7Z" fill="rgb(28, 22, 20)"/><path d="M977 16 L980 16 L979 21 L975 20Z" fill="rgb(113, 55, 35)"/><path d="M565 15 L569 15 L568 18 L566 17Z" fill="rgb(32, 25, 23)"/><path d="M1057 14 L1062 14 L1060 16 L1055 15Z" fill="rgb(71, 86, 105)"/><path d="M1183 1 L1188 1 L1187 5 L1181 5Z" fill="rgb(108, 125, 148)"/><path d="M126 2 L132 3 L129 8 L124 6Z" fill="rgb(41, 33, 29)"/><path d="M956 3 L962 4 L962 5 L955 4Z" fill="rgb(140, 70, 44)"/><path d="M341 17 L347 17 L347 20 L340 20Z" fill="rgb(44, 35, 32)"/><path d="M840 8 L848 7 L848 12 L841 11Z" fill="rgb(65, 76, 91)"/><path d="M1043 3 L1048 4 L1049 8 L1041 6Z" fill="rgb(115, 56, 36)"/><path d="M94 10 L96 11 L97 14 L94 13Z" fill="rgb(32, 25, 23)"/><path d="M378 11 L387 12 L382 17 L377 15Z" fill="rgb(32, 26, 23)"/><path d="M155 8 L160 7 L158 13 L154 11Z" fill="rgb(51, 41, 37)"/><path d="M648 5 L652 6 L653 10 L649 8Z" fill="rgb(77, 90, 107)"/><path d="M569 5 L573 6 L574 9 L571 9Z" fill="rgb(28, 22, 20)"/><path d="M599 3 L604 2 L604 9 L599 8Z" fill="rgb(31, 24, 22)"/><path d="M138 15 L144 15 L147 18 L138 18Z" fill="rgb(32, 25, 23)"/><path d="M77 10 L83 10 L87 15 L77 15Z" fill="rgb(43, 34, 31)"/><path d="M311 0 L314 1 L315 4 L313 4Z" fill="rgb(50, 40, 36)"/><path d="M315 15 L318 15 L319 21 L314 20Z" fill="rgb(28, 22, 20)"/><path d="M801 2 L802 1 L802 6 L803 6Z" fill="rgb(108, 125, 146)"/><path d="M563 14 L569 14 L572 18 L564 18Z" fill="rgb(50, 41, 37)"/><path d="M1034 7 L1042 6 L1040 10 L1035 9Z" fill="rgb(144, 72, 45)"/><path d="M1131 8 L1135 7 L1133 12 L1132 10Z" fill="rgb(33, 44, 60)"/><path d="M313 15 L318 15 L320 17 L313 16Z" fill="rgb(47, 37, 34)"/><path d="M529 4 L535 5 L533 7 L528 6Z" fill="rgb(38, 31, 28)"/><path d="M1210 6 L1214 6 L1213 8 L1211 7Z" fill="rgb(44, 56, 73)"/><path d="M125 11 L133 12 L130 13 L123 13Z" fill="rgb(35, 28, 25)"/><path d="M930 9 L936 8 L935 13 L931 13Z" fill="rgb(132, 65, 41)"/><path d="M1221 10 L1224 10 L1224 14 L1223 13Z" fill="rgb(45, 57, 75)"/><path d="M1152 8 L1158 9 L1155 10 L1151 10Z" fill="rgb(85, 100, 121)"/><path d="M914 11 L918 10 L918 13 L912 12Z" fill="rgb(206, 107, 65)"/><path d="M776 4 L780 4 L780 9 L775 9Z" fill="rgb(100, 115, 135)"/><path d="M5 4 L10 4 L12 8 L6 7Z" fill="rgb(32, 25, 23)"/><path d="M956 7 L962 8 L961 11 L957 10Z" fill="rgb(139, 69, 43)"/><path d="M174 1 L179 0 L181 5 L174 3Z" fill="rgb(46, 37, 33)"/><path d="M418 6 L427 5 L424 12 L416 11Z" fill="rgb(28, 22, 20)"/><path d="M993 14 L995 15 L996 16 L993 15Z" fill="rgb(181, 93, 57)"/><path d="M1051 2 L1053 3 L1053 8 L1052 8Z" fill="rgb(45, 57, 75)"/><path d="M950 17 L952 16 L952 22 L952 19Z" fill="rgb(212, 111, 67)"/><path d="M534 2 L538 3 L537 7 L533 6Z" fill="rgb(51, 41, 37)"/><path d="M862 16 L869 16 L868 21 L860 19Z" fill="rgb(112, 54, 35)"/><path d="M382 2 L388 2 L388 7 L383 6Z" fill="rgb(28, 22, 20)"/><path d="M279 10 L283 10 L283 12 L278 12Z" fill="rgb(33, 26, 24)"/><path d="M625 1 L631 1 L630 5 L625 4Z" fill="rgb(41, 49, 61)"/><path d="M450 0 L454 -1 L456 2 L448 1Z" fill="rgb(51, 41, 37)"/><path d="M606 0 L609 -0 L609 3 L606 2Z" fill="rgb(38, 45, 57)"/><path d="M442 6 L448 5 L446 11 L443 9Z" fill="rgb(28, 22, 20)"/><path d="M252 15 L254 14 L253 19 L252 18Z" fill="rgb(48, 38, 35)"/><path d="M771 11 L773 12 L774 13 L769 13Z" fill="rgb(47, 56, 69)"/><path d="M211 6 L219 6 L219 11 L210 10Z" fill="rgb(30, 23, 21)"/><path d="M826 4 L828 3 L828 9 L827 8Z" fill="rgb(48, 56, 69)"/><path d="M644 15 L646 15 L645 19 L642 18Z" fill="rgb(87, 101, 119)"/><path d="M1088 12 L1091 11 L1089 16 L1088 15Z" fill="rgb(27, 37, 53)"/><path d="M99 14 L103 15 L102 18 L98 17Z" fill="rgb(30, 24, 22)"/><path d="M1030 18 L1035 19 L1036 23 L1031 21Z" fill="rgb(177, 91, 56)"/><path d="M698 8 L705 8 L702 10 L698 10Z" fill="rgb(36, 43, 55)"/><path d="M1214 18 L1217 19 L1217 22 L1214 20Z" fill="rgb(106, 124, 146)"/><path d="M577 10 L578 9 L579 13 L576 12Z" fill="rgb(32, 25, 23)"/><path d="M650 7 L653 7 L652 11 L650 10Z" fill="rgb(30, 37, 47)"/><path d="M605 14 L607 14 L607 17 L607 16Z" fill="rgb(26, 32, 42)"/><path d="M706 17 L711 16 L713 23 L706 21Z" fill="rgb(74, 86, 102)"/><path d="M82 13 L89 13 L85 16 L83 15Z" fill="rgb(33, 26, 24)"/><path d="M332 9 L335 8 L334 11 L334 11Z" fill="rgb(51, 41, 37)"/><path d="M973 2 L977 3 L976 7 L972 5Z" fill="rgb(199, 103, 63)"/><path d="M609 1 L618 0 L615 5 L609 3Z" fill="rgb(32, 39, 49)"/><path d="M323 17 L329 18 L328 21 L321 21Z" fill="rgb(42, 34, 31)"/><path d="M202 4 L207 4 L205 8 L203 7Z" fill="rgb(29, 23, 20)"/><path d="M379 15 L384 15 L385 21 L378 20Z" fill="rgb(49, 40, 36)"/><path d="M1110 2 L1117 2 L1116 8 L1110 7Z" fill="rgb(65, 79, 98)"/><path d="M228 5 L229 6 L230 9 L230 8Z" fill="rgb(51, 41, 37)"/><path d="M1077 4 L1079 5 L1078 6 L1078 5Z" fill="rgb(25, 35, 51)"/><path d="M633 10 L637 10 L638 13 L631 12Z" fill="rgb(28, 35, 45)"/><path d="M64 5 L73 4 L73 11 L65 9Z" fill="rgb(40, 32, 29)"/><path d="M1222 11 L1225 11 L1225 13 L1220 12Z" fill="rgb(28, 39, 55)"/><path d="M1194 5 L1202 6 L1200 7 L1194 6Z" fill="rgb(39, 51, 68)"/><path d="M744 11 L748 11 L747 13 L743 12Z" fill="rgb(89, 103, 121)"/><path d="M977 10 L983 10 L986 14 L977 13Z" fill="rgb(117, 57, 36)"/><path d="M708 18 L711 18 L711 22 L707 21Z" fill="rgb(73, 86, 102)"/><path d="M385 11 L389 10 L389 15 L386 13Z" fill="rgb(45, 36, 33)"/><path d="M939 9 L943 10 L941 14 L937 13Z" fill="rgb(117, 57, 36)"/><path d="M30 15 L34 15 L33 19 L32 18Z" fill="rgb(41, 33, 30)"/><path d="M718 2 L722 2 L722 3 L718 3Z" fill="rgb(35, 42, 53)"/><path d="M575 9 L580 8 L578 15 L574 14Z" fill="rgb(31, 24, 22)"/><path d="M625 9 L629 9 L631 10 L625 10Z" fill="rgb(109, 126, 147)"/><path d="M44 8 L48 9 L49 10 L43 10Z" fill="rgb(46, 37, 33)"/><path d="M1135 16 L1141 16 L1139 17 L1133 17Z" fill="rgb(84, 99, 119)"/><path d="M865 0 L870 1 L867 6 L865 4Z" fill="rgb(92, 43, 28)"/><path d="M407 3 L409 3 L409 7 L406 7Z" fill="rgb(35, 28, 25)"/><path d="M666 17 L668 18 L668 22 L668 20Z" fill="rgb(58, 68, 82)"/><path d="M401 12 L405 12 L403 15 L399 14Z" fill="rgb(42, 33, 30)"/><path d="M807 1 L816 1 L811 4 L807 4Z" fill="rgb(39, 46, 58)"/><path d="M954 1 L959 1 L957 5 L954 3Z" fill="rgb(166, 85, 52)"/><path d="M380 15 L385 15 L384 20 L378 19Z" fill="rgb(38, 30, 27)"/><path d="M48 18 L55 17 L55 20 L49 20Z" fill="rgb(48, 39, 35)"/><path d="M910 5 L916 4 L913 10 L909 7Z" fill="rgb(189, 97, 60)"/><path d="M1074 12 L1078 12 L1079 18 L1074 16Z" fill="rgb(63, 77, 96)"/><path d="M317 4 L322 5 L320 10 L318 7Z" fill="rgb(41, 32, 29)"/><path d="M441 1 L447 1 L450 6 L439 6Z" fill="rgb(36, 29, 26)"/><path d="M1050 1 L1055 1 L1055 4 L1052 4Z" fill="rgb(131, 150, 175)"/><path d="M401 0 L405 -1 L407 5 L400 3Z" fill="rgb(44, 35, 32)"/><path d="M1194 4 L1196 3 L1196 8 L1196 7Z" fill="rgb(82, 97, 118)"/><path d="M970 17 L976 17 L975 22 L969 21Z" fill="rgb(168, 86, 53)"/><path d="M399 15 L402 15 L402 21 L398 21Z" fill="rgb(44, 35, 32)"/><path d="M440 7 L445 7 L446 11 L439 10Z" fill="rgb(46, 37, 34)"/><path d="M587 3 L592 2 L593 8 L586 7Z" fill="rgb(29, 23, 21)"/><path d="M55 12 L59 12 L58 15 L55 14Z" fill="rgb(29, 23, 21)"/><path d="M344 17 L347 18 L345 21 L345 20Z" fill="rgb(29, 23, 21)"/><path d="M1138 5 L1141 6 L1140 9 L1139 8Z" fill="rgb(57, 69, 88)"/><path d="M560 10 L564 9 L563 13 L559 12Z" fill="rgb(42, 34, 30)"/><path d="M812 6 L815 5 L815 9 L813 8Z" fill="rgb(107, 123, 144)"/><path d="M994 12 L999 11 L998 17 L996 15Z" fill="rgb(126, 62, 39)"/><path d="M784 2 L790 2 L788 5 L783 3Z" fill="rgb(90, 104, 122)"/><path d="M843 9 L852 10 L846 15 L841 15Z" fill="rgb(113, 131, 152)"/><path d="M1072 11 L1075 11 L1075 14 L1071 14Z" fill="rgb(80, 95, 115)"/><path d="M705 16 L711 15 L710 19 L705 18Z" fill="rgb(40, 48, 60)"/><path d="M98 9 L103 8 L106 11 L97 11Z" fill="rgb(37, 29, 26)"/><path d="M39 1 L44 2 L43 3 L40 3Z" fill="rgb(42, 33, 30)"/><path d="M620 1 L624 0 L626 4 L621 3Z" fill="rgb(103, 119, 139)"/><path d="M740 10 L741 10 L741 15 L738 13Z" fill="rgb(34, 41, 52)"/><path d="M802 11 L806 12 L807 15 L803 13Z" fill="rgb(118, 136, 158)"/><path d="M1025 9 L1029 8 L1029 10 L1023 10Z" fill="rgb(103, 49, 32)"/><path d="M758 13 L761 14 L762 17 L759 16Z" fill="rgb(113, 130, 151)"/><path d="M321 16 L330 17 L329 19 L322 19Z" fill="rgb(50, 41, 37)"/><path d="M485 14 L488 13 L489 20 L483 19Z" fill="rgb(40, 32, 29)"/><path d="M108 16 L111 16 L110 21 L108 21Z" fill="rgb(30, 24, 21)"/><path d="M623 10 L626 10 L628 14 L624 13Z" fill="rgb(55, 65, 79)"/><path d="M434 2 L440 1 L439 7 L435 6Z" fill="rgb(28, 22, 20)"/><path d="M1053 3 L1058 3 L1059 8 L1053 7Z" fill="rgb(46, 58, 76)"/><path d="M274 9 L278 8 L279 13 L274 12Z" fill="rgb(42, 33, 30)"/><path d="M1177 4 L1180 4 L1178 6 L1176 5Z" fill="rgb(25, 36, 52)"/><path d="M214 6 L218 5 L218 8 L215 7Z" fill="rgb(48, 39, 35)"/><path d="M673 6 L679 5 L676 11 L674 11Z" fill="rgb(86, 100, 117)"/><path d="M77 8 L81 8 L82 13 L76 12Z" fill="rgb(31, 25, 22)"/><path d="M460 9 L467 8 L464 11 L462 11Z" fill="rgb(37, 29, 26)"/><path d="M450 17 L455 18 L454 20 L451 18Z" fill="rgb(28, 22, 20)"/><path d="M152 6 L157 6 L158 9 L153 8Z" fill="rgb(28, 22, 20)"/><path d="M1126 16 L1130 16 L1128 18 L1126 18Z" fill="rgb(73, 87, 107)"/><path d="M942 10 L944 11 L943 16 L943 14Z" fill="rgb(187, 96, 59)"/><path d="M885 11 L888 11 L888 15 L886 14Z" fill="rgb(96, 45, 30)"/><path d="M585 9 L587 9 L586 12 L584 11Z" fill="rgb(43, 34, 31)"/><path d="M1098 7 L1104 6 L1105 9 L1098 8Z" fill="rgb(119, 138, 161)"/><path d="M637 9 L640 8 L640 15 L638 13Z" fill="rgb(77, 90, 106)"/><path d="M873 15 L874 16 L875 21 L873 20Z" fill="rgb(197, 102, 62)"/><path d="M986 18 L991 18 L990 23 L986 21Z" fill="rgb(212, 110, 67)"/><path d="M320 15 L326 15 L326 20 L318 19Z" fill="rgb(46, 37, 34)"/><path d="M1190 4 L1192 3 L1192 6 L1191 6Z" fill="rgb(61, 74, 93)"/><path d="M315 17 L320 17 L318 23 L314 20Z" fill="rgb(33, 26, 24)"/><path d="M130 15 L135 15 L135 19 L130 17Z" fill="rgb(30, 24, 22)"/><path d="M1022 14 L1026 14 L1028 17 L1022 16Z" fill="rgb(147, 74, 46)"/><path d="M295 9 L297 9 L296 12 L296 12Z" fill="rgb(28, 22, 20)"/><path d="M387 10 L394 9 L394 13 L386 12Z" fill="rgb(51, 41, 37)"/><path d="M387 12 L395 12 L392 14 L389 13Z" fill="rgb(47, 38, 34)"/><path d="M734 14 L739 14 L739 16 L733 15Z" fill="rgb(90, 104, 122)"/><path d="M660 11 L663 10 L664 13 L662 12Z" fill="rgb(104, 121, 141)"/><path d="M442 16 L448 15 L447 22 L442 19Z" fill="rgb(47, 38, 34)"/><path d="M311 9 L313 8 L312 11 L310 10Z" fill="rgb(41, 33, 30)"/><path d="M1079 1 L1084 1 L1082 5 L1077 5Z" fill="rgb(107, 124, 147)"/><path d="M272 16 L274 16 L273 18 L272 18Z" fill="rgb(43, 35, 31)"/><path d="M585 4 L590 3 L591 8 L586 7Z" fill="rgb(47, 38, 34)"/><path d="M725 9 L729 8 L726 12 L725 11Z" fill="rgb(87, 101, 119)"/><path d="M883 4 L888 4 L888 8 L884 7Z" fill="rgb(137, 68, 43)"/><path d="M962 12 L965 12 L964 15 L964 15Z" fill="rgb(95, 45, 29)"/><path d="M455 13 L459 12 L458 17 L457 15Z" fill="rgb(49, 39, 36)"/><path d="M177 15 L181 15 L182 18 L178 17Z" fill="rgb(34, 27, 24)"/><path d="M453 0 L457 -1 L457 2 L453 2Z" fill="rgb(30, 23, 21)"/><path d="M842 6 L850 5 L846 11 L842 9Z" fill="rgb(26, 32, 42)"/><path d="M1186 12 L1188 13 L1187 15 L1186 13Z" fill="rgb(71, 85, 104)"/><path d="M1192 13 L1197 13 L1197 16 L1190 15Z" fill="rgb(108, 126, 148)"/><path d="M214 17 L216 16 L216 22 L215 20Z" fill="rgb(44, 36, 32)"/><path d="M968 10 L970 10 L971 11 L969 11Z" fill="rgb(182, 94, 57)"/><path d="M343 4 L349 3 L347 6 L342 6Z" fill="rgb(46, 37, 34)"/><path d="M882 12 L884 11 L884 17 L883 15Z" fill="rgb(101, 48, 31)"/><path d="M637 12 L643 12 L639 16 L637 14Z" fill="rgb(109, 126, 147)"/><path d="M411 7 L415 7 L415 12 L410 11Z" fill="rgb(30, 24, 21)"/><path d="M913 14 L916 14 L915 20 L912 19Z" fill="rgb(121, 59, 38)"/><path d="M497 16 L504 15 L505 20 L497 19Z" fill="rgb(40, 32, 29)"/><path d="M233 2 L238 2 L239 6 L233 6Z" fill="rgb(42, 33, 30)"/><path d="M110 14 L113 14 L115 18 L111 16Z" fill="rgb(28, 22, 20)"/><path d="M625 14 L631 14 L629 20 L624 18Z" fill="rgb(29, 36, 46)"/><path d="M868 17 L876 16 L873 20 L866 19Z" fill="rgb(144, 72, 45)"/><path d="M992 2 L996 1 L997 6 L992 4Z" fill="rgb(111, 53, 34)"/><path d="M587 7 L589 7 L590 9 L588 8Z" fill="rgb(51, 41, 37)"/><path d="M662 6 L667 6 L667 11 L662 10Z" fill="rgb(116, 134, 156)"/><path d="M111 8 L115 8 L115 11 L110 11Z" fill="rgb(51, 41, 37)"/><path d="M245 11 L247 12 L246 13 L246 12Z" fill="rgb(28, 22, 20)"/><path d="M1166 17 L1172 18 L1169 23 L1167 22Z" fill="rgb(79, 94, 115)"/><path d="M953 3 L958 2 L957 7 L955 5Z" fill="rgb(93, 43, 29)"/><path d="M1006 17 L1010 17 L1008 21 L1005 19Z" fill="rgb(161, 82, 51)"/><path d="M1104 7 L1110 7 L1108 12 L1103 11Z" fill="rgb(119, 137, 160)"/><path d="M382 15 L388 15 L389 18 L384 17Z" fill="rgb(28, 22, 20)"/><path d="M1175 17 L1181 17 L1180 20 L1176 19Z" fill="rgb(68, 82, 101)"/><path d="M853 10 L856 11 L856 12 L851 11Z" fill="rgb(30, 37, 47)"/><path d="M74 11 L77 10 L77 15 L74 14Z" fill="rgb(30, 24, 21)"/><path d="M517 0 L523 -0 L523 3 L518 3Z" fill="rgb(33, 26, 23)"/><path d="M604 9 L605 9 L605 12 L605 11Z" fill="rgb(98, 114, 133)"/><path d="M498 9 L503 10 L501 13 L497 12Z" fill="rgb(28, 22, 20)"/><path d="M1223 2 L1231 2 L1227 6 L1223 5Z" fill="rgb(39, 51, 68)"/><path d="M125 12 L131 12 L130 17 L124 15Z" fill="rgb(48, 38, 35)"/><path d="M902 10 L906 11 L905 12 L904 12Z" fill="rgb(96, 45, 29)"/><path d="M254 5 L259 5 L258 9 L253 8Z" fill="rgb(30, 23, 21)"/><path d="M1165 1 L1167 2 L1167 6 L1166 5Z" fill="rgb(63, 76, 95)"/><path d="M731 18 L735 17 L735 20 L733 19Z" fill="rgb(93, 108, 126)"/><path d="M1164 11 L1168 11 L1168 13 L1163 13Z" fill="rgb(98, 115, 136)"/><path d="M325 5 L331 5 L329 10 L325 8Z" fill="rgb(47, 38, 34)"/><path d="M955 16 L959 16 L962 18 L955 18Z" fill="rgb(111, 53, 34)"/><path d="M882 6 L891 6 L887 8 L882 7Z" fill="rgb(176, 90, 55)"/><path d="M647 5 L653 5 L653 10 L645 8Z" fill="rgb(27, 33, 43)"/><path d="M22 10 L24 9 L26 14 L24 12Z" fill="rgb(37, 29, 26)"/><path d="M805 9 L813 10 L813 14 L803 13Z" fill="rgb(63, 73, 88)"/><path d="M392 17 L399 17 L400 21 L390 20Z" fill="rgb(44, 36, 32)"/><path d="M697 13 L702 13 L703 18 L697 17Z" fill="rgb(44, 53, 65)"/><path d="M594 15 L597 14 L598 18 L594 18Z" fill="rgb(31, 24, 22)"/><path d="M506 0 L512 1 L510 2 L504 2Z" fill="rgb(33, 26, 24)"/><path d="M414 12 L418 12 L418 14 L415 14Z" fill="rgb(29, 23, 21)"/><path d="M103 12 L108 13 L106 18 L103 15Z" fill="rgb(36, 28, 26)"/><path d="M1012 8 L1016 8 L1017 11 L1010 10Z" fill="rgb(129, 64, 40)"/><path d="M1143 5 L1150 6 L1146 8 L1142 7Z" fill="rgb(42, 54, 71)"/><path d="M546 5 L550 4 L550 7 L544 6Z" fill="rgb(41, 33, 29)"/><path d="M446 13 L454 12 L453 16 L448 16Z" fill="rgb(50, 41, 37)"/><path d="M172 3 L176 3 L174 8 L173 7Z" fill="rgb(48, 39, 35)"/><path d="M395 0 L402 -0 L404 4 L397 3Z" fill="rgb(43, 34, 31)"/></svg>
<div id="dock" class="a" style="left:53px;top:730px;width:1125px;height:31px;border-radius:4px 4px 0 0;background:linear-gradient(90deg,#5d5352 0,#635a5a 350px,#6b6a72 560px,#737b8e 700px,#8a8090 800px,#b7786a 880px,#d38465 950px,#c88575 1000px,#a08088 1060px,#8f8590 1125px)"></div>
<svg class="a" style="left:59px;top:734px" width="25.0" height="27" viewBox="0 0 25.0 27"><rect x="0" y="1" width="25" height="26" rx="2" fill="#6cc3f5"/><path d="M0 1h11l-3 13h4l-1 13H2q-2 0-2-2z" fill="#2f8de0"/><path d="M6 7v3M17 7v3" stroke="#111" stroke-width="1.6"/><path d="M4 18q8 5 17 0" fill="none" stroke="#111" stroke-width="1.3"/></svg>
<svg class="a" style="left:89px;top:734px" width="26.0" height="27" viewBox="0 0 26.0 27"><circle cx="13" cy="14" r="13" fill="#db4437"/><path d="M13 14L1.7 20.5A13 13 0 0 0 15 26.9z" fill="#0f9d58"/><path d="M13 14h13A13 13 0 0 1 15 26.9z" fill="#f4c20d"/><circle cx="13" cy="14" r="6" fill="#fff"/><circle cx="13" cy="14" r="4.6" fill="#4285f4"/></svg>
<svg class="a" style="left:120px;top:734px" width="26.0" height="27" viewBox="0 0 26.0 27"><circle cx="13" cy="14" r="13" fill="#b8bcc2"/><circle cx="13" cy="14" r="11" fill="#8e939a"/><path d="M7 20l4-8l8-6l-2 8l-7 5z" fill="#3a3d42"/></svg>
<svg class="a" style="left:151px;top:734px" width="25.0" height="27" viewBox="0 0 25.0 27"><path d="M3 3h19l2 22H5z" fill="#fefefe" stroke="#ddd"/><path d="M3 3h19v4H3z" fill="#f7d548"/></svg>
<svg class="a" style="left:180px;top:734px" width="28.0" height="27" viewBox="0 0 28.0 27"><path d="M3 2h22l2 22H1z" fill="#5a5a5a"/><path d="M1 24h26v3H1z" fill="#3d3d3d"/><path d="M5 4h18v17H5z" fill="#474747"/><text x="9.5" y="19" font-family="Liberation Sans" font-weight="bold" font-size="15" fill="#f29a2a">S</text></svg>
<svg class="a" style="left:212px;top:734px" width="28.0" height="27" viewBox="0 0 28.0 27"><circle cx="14" cy="14" r="12.5" fill="#2a2a2a"/><path d="M3 12A11 11 0 0 1 20 4" stroke="#e0302a" stroke-width="4" fill="none"/><path d="M25 16A11 11 0 0 1 9 25" stroke="#2f80e0" stroke-width="4" fill="none"/><circle cx="14" cy="14" r="7" fill="#d8d3c8"/><circle cx="14" cy="14" r="3" fill="#9e978a"/></svg>
<svg class="a" style="left:242px;top:734px" width="28.0" height="27" viewBox="0 0 28.0 27"><circle cx="14" cy="14" r="13" fill="#f09a3a"/><circle cx="15" cy="14" r="12" fill="#2c2255"/><path d="M4 10.5h22M3.5 14h23M4 17.5h22" stroke="#fff" stroke-width="1.6"/></svg>
<svg class="a" style="left:272px;top:734px" width="29.0" height="27" viewBox="0 0 29.0 27"><circle cx="14.5" cy="14" r="11" fill="none" stroke="#3db53f" stroke-width="5"/><path d="M6 6l5 5M10 4l3 5" stroke="#9fd89f" stroke-width="1"/></svg>
<svg class="a" style="left:305px;top:734px" width="26.0" height="27" viewBox="0 0 26.0 27"><circle cx="13" cy="14" r="13" fill="#f39a2a"/><circle cx="13" cy="14" r="11.5" fill="#f07b18"/><path d="M5 9q4-2 7.5 1v9q-3.5-2.5-7.5-1zM21 9q-4-2-7.5 1v9q3.5-2.5 7.5-1z" fill="#fff"/></svg>
<svg class="a" style="left:334px;top:734px" width="27.0" height="27" viewBox="0 0 27.0 27"><path d="M2 5l20-3l3 19l-20 3z" fill="#c5b48e"/><rect x="1" y="6" width="22" height="18" fill="#eee"/><rect x="3" y="8" width="18" height="13" fill="#6a9bd0"/><path d="M3 17l6-4l6 5l6-3v6H3z" fill="#e8e8e8"/><circle cx="20" cy="20" r="5.5" fill="#888" stroke="#555"/></svg>
<svg class="a" style="left:364px;top:734px" width="29.0" height="27" viewBox="0 0 29.0 27"><rect x="1" y="4" width="27" height="18" rx="1" fill="#c0c5cc"/><rect x="3" y="6" width="23" height="14" fill="#3a8ad8"/><path d="M10 24h9v3h-9z" fill="#b0b0b0"/><rect x="18" y="2" width="3" height="25" fill="#e02020"/><rect x="23" y="2" width="3" height="25" fill="#e02020"/></svg>
<svg class="a" style="left:395px;top:734px" width="26.0" height="27" viewBox="0 0 26.0 27"><path d="M13 1l12 6v13l-12 7l-12-7V7z" fill="#1f5c9e"/><path d="M13 1l12 6l-12 6l-12-6z" fill="#7fb0e0"/><path d="M13 13v14" stroke="#bcd" stroke-width="1"/></svg>
<svg class="a" style="left:427px;top:734px" width="27.0" height="27" viewBox="0 0 27.0 27"><rect x="1" y="2" width="25" height="24" rx="2" fill="#d6d6d6"/><rect x="2" y="3" width="23" height="22" fill="#1a1a1a"/><path d="M5 8l3 2l-3 2M9 13h4" stroke="#eee" stroke-width="1.1" fill="none"/></svg>
<svg class="a" style="left:457px;top:734px" width="26.0" height="27" viewBox="0 0 26.0 27"><circle cx="13" cy="14" r="13" fill="#fff" stroke="#e6e6e6"/><circle cx="13" cy="14" r="11" fill="none" stroke="#d86adf" stroke-width="1.5"/><path d="M10 19V9l8-2v10" fill="none" stroke="#e04c8a" stroke-width="2"/><circle cx="9" cy="19" r="2.3" fill="#e04c8a"/><circle cx="17" cy="17" r="2.3" fill="#e04c8a"/></svg>
<svg class="a" style="left:489px;top:734px" width="26.0" height="27" viewBox="0 0 26.0 27"><path d="M2 6q5-3 11 0v8q-6-3-11 0z" fill="#f2502a"/><path d="M14 6q5 3 11 0v8q-6 3-11 0z" fill="#7ebe2f"/><path d="M2 15q5-3 11 0v8q-6-3-11 0z" fill="#1ea3e8"/><path d="M14 15q5 3 11 0v8q-6 3-11 0z" fill="#fdb900"/><rect x="19" y="19" width="2.5" height="8" fill="#e02020"/><rect x="23" y="19" width="2.5" height="8" fill="#e02020"/></svg>
<svg class="a" style="left:520px;top:734px" width="26.0" height="27" viewBox="0 0 26.0 27"><path d="M1 4h9l2 2h13v21H1z" fill="#f4d46a"/><rect x="3" y="8" width="20" height="6" fill="#fff"/><rect x="2" y="14" width="22" height="12" fill="#f8e08a"/><rect x="6" y="18" width="14" height="6" fill="#8cc4ea"/><rect x="16" y="19" width="2.5" height="8" fill="#e02020"/><rect x="21" y="19" width="2.5" height="8" fill="#e02020"/></svg>
<svg class="a" style="left:550px;top:734px" width="26.0" height="27" viewBox="0 0 26.0 27"><circle cx="13" cy="14" r="13" fill="#e8e8e8"/><circle cx="13" cy="14" r="11.5" fill="#1e8ff0"/><path d="M19 7l-8 6l2 2z" fill="#fff"/><path d="M7 21l6-6l-2-2z" fill="#f33"/></svg>
<svg class="a" style="left:581px;top:734px" width="28.0" height="27" viewBox="0 0 28.0 27"><circle cx="14" cy="13.5" r="12" fill="#2a2a2a"/><circle cx="14" cy="13.5" r="9.5" fill="#3a6fb0"/><circle cx="14" cy="13.5" r="5.5" fill="#1a1a1a"/><path d="M18 18l7 7" stroke="#2a2a2a" stroke-width="4"/></svg>
<div class="a" style="left:617px;top:733px;width:1px;height:28px;background:rgba(40,40,40,.6)"></div>
<svg class="a" style="left:624px;top:734px" width="29.0" height="27" viewBox="0 0 29.0 27"><path d="M1 5q0-2 2-2h8l2 2h13q2 0 2 2v19H1z" fill="#5db6ea"/><path d="M1 9h28v17H1z" fill="#86cdf6"/><path d="M15 12q-3 2-2 6q-1 3 2 4q3-1 2-4q1-4-2-6z" fill="none" stroke="#5aa8d8" stroke-width=".8"/></svg>
<svg class="a" style="left:655.5px;top:734px" width="27.5" height="27" viewBox="0 0 27.5 27"><rect x="0.5" y="9" width="26.5" height="15" fill="#f4f4f4" stroke="#ccc" stroke-width=".5"/><path d="M3 12.0h19.5" stroke="#aaa" stroke-width=".6"/><path d="M3 14.5h19.5" stroke="#aaa" stroke-width=".6"/><path d="M3 17.0h19.5" stroke="#aaa" stroke-width=".6"/><path d="M3 19.5h19.5" stroke="#aaa" stroke-width=".6"/><path d="M3 22.0h19.5" stroke="#aaa" stroke-width=".6"/><circle cx="21.5" cy="22" r="5" fill="#db4437"/><circle cx="21.5" cy="22" r="2.2" fill="#4285f4"/></svg>
<svg class="a" style="left:686px;top:734px" width="28.0" height="27" viewBox="0 0 28.0 27"><rect x="0.5" y="9" width="27" height="15" fill="#f0f0f0" stroke="#ccc" stroke-width=".5"/><path d="M3 12.0h20" stroke="#aaa" stroke-width=".6"/><path d="M3 14.5h20" stroke="#aaa" stroke-width=".6"/><path d="M3 17.0h20" stroke="#aaa" stroke-width=".6"/><path d="M3 19.5h20" stroke="#aaa" stroke-width=".6"/><path d="M3 22.0h20" stroke="#aaa" stroke-width=".6"/><circle cx="22" cy="22" r="4.5" fill="none" stroke="#3db53f" stroke-width="2.5"/></svg>
<svg class="a" style="left:717px;top:734px" width="28.0" height="27" viewBox="0 0 28.0 27"><rect x="0.5" y="3" width="27" height="24" fill="#fafafa" stroke="#ccc" stroke-width=".5"/><path d="M3 6.0h20" stroke="#aaa" stroke-width=".6"/><path d="M3 8.5h20" stroke="#aaa" stroke-width=".6"/><path d="M3 11.0h20" stroke="#aaa" stroke-width=".6"/><path d="M3 13.5h20" stroke="#aaa" stroke-width=".6"/><path d="M3 16.0h20" stroke="#aaa" stroke-width=".6"/><path d="M3 18.5h20" stroke="#aaa" stroke-width=".6"/><path d="M3 21.0h20" stroke="#aaa" stroke-width=".6"/><path d="M3 23.5h20" stroke="#aaa" stroke-width=".6"/><rect x="18" y="19" width="9" height="8" fill="#7f9cc0" stroke="#4a6a90" stroke-width=".6"/></svg>
<svg class="a" style="left:748px;top:734px" width="28.0" height="27" viewBox="0 0 28.0 27"><rect x="0.5" y="3" width="27" height="24" fill="#f7f7f7" stroke="#ccc" stroke-width=".5"/><path d="M3 6.0h20" stroke="#aaa" stroke-width=".6"/><path d="M3 8.5h20" stroke="#aaa" stroke-width=".6"/><path d="M3 11.0h20" stroke="#aaa" stroke-width=".6"/><path d="M3 13.5h20" stroke="#aaa" stroke-width=".6"/><path d="M3 16.0h20" stroke="#aaa" stroke-width=".6"/><path d="M3 18.5h20" stroke="#aaa" stroke-width=".6"/><path d="M3 21.0h20" stroke="#aaa" stroke-width=".6"/><path d="M3 23.5h20" stroke="#aaa" stroke-width=".6"/><rect x="18" y="19" width="9" height="8" fill="#7f9cc0" stroke="#4a6a90" stroke-width=".6"/></svg>
<svg class="a" style="left:778px;top:734px" width="28.0" height="27" viewBox="0 0 28.0 27"><rect x="0.5" y="9" width="27" height="15" fill="#f2f2f2" stroke="#ccc" stroke-width=".5"/><path d="M3 12.0h20" stroke="#aaa" stroke-width=".6"/><path d="M3 14.5h20" stroke="#aaa" stroke-width=".6"/><path d="M3 17.0h20" stroke="#aaa" stroke-width=".6"/><path d="M3 19.5h20" stroke="#aaa" stroke-width=".6"/><path d="M3 22.0h20" stroke="#aaa" stroke-width=".6"/><rect x="18" y="19" width="9" height="8" fill="#7f9cc0" stroke="#4a6a90" stroke-width=".6"/></svg>
<svg class="a" style="left:809px;top:734px" width="28.0" height="27" viewBox="0 0 28.0 27"><rect x="0.5" y="9" width="27" height="15" fill="#f5f5f5" stroke="#ccc" stroke-width=".5"/><path d="M3 12.0h20" stroke="#aaa" stroke-width=".6"/><path d="M3 14.5h20" stroke="#aaa" stroke-width=".6"/><path d="M3 17.0h20" stroke="#aaa" stroke-width=".6"/><path d="M3 19.5h20" stroke="#aaa" stroke-width=".6"/><path d="M3 22.0h20" stroke="#aaa" stroke-width=".6"/><rect x="18" y="19" width="9" height="8" fill="#7f9cc0" stroke="#4a6a90" stroke-width=".6"/></svg>
<svg class="a" style="left:840px;top:734px" width="28.0" height="27" viewBox="0 0 28.0 27"><rect x="0.5" y="3" width="27" height="24" fill="#f8f8f8" stroke="#ccc" stroke-width=".5"/><path d="M3 6.0h20" stroke="#aaa" stroke-width=".6"/><path d="M3 8.5h20" stroke="#aaa" stroke-width=".6"/><path d="M3 11.0h20" stroke="#aaa" stroke-width=".6"/><path d="M3 13.5h20" stroke="#aaa" stroke-width=".6"/><path d="M3 16.0h20" stroke="#aaa" stroke-width=".6"/><path d="M3 18.5h20" stroke="#aaa" stroke-width=".6"/><path d="M3 21.0h20" stroke="#aaa" stroke-width=".6"/><path d="M3 23.5h20" stroke="#aaa" stroke-width=".6"/><rect x="18" y="19" width="9" height="8" fill="#7f9cc0" stroke="#4a6a90" stroke-width=".6"/></svg>
<svg class="a" style="left:870px;top:734px" width="28.0" height="27" viewBox="0 0 28.0 27"><rect x="0.5" y="9" width="27" height="15" fill="#f8f8f8" stroke="#ccc" stroke-width=".5"/><path d="M3 12.0h20" stroke="#aaa" stroke-width=".6"/><path d="M3 14.5h20" stroke="#aaa" stroke-width=".6"/><path d="M3 17.0h20" stroke="#aaa" stroke-width=".6"/><path d="M3 19.5h20" stroke="#aaa" stroke-width=".6"/><path d="M3 22.0h20" stroke="#aaa" stroke-width=".6"/><rect x="18" y="19" width="9" height="8" fill="#7f9cc0" stroke="#4a6a90" stroke-width=".6"/></svg>
<svg class="a" style="left:901px;top:734px" width="28.0" height="27" viewBox="0 0 28.0 27"><rect x="0.5" y="9" width="27" height="15" fill="#f0f0f0" stroke="#ccc" stroke-width=".5"/><path d="M3 12.0h20" stroke="#aaa" stroke-width=".6"/><path d="M3 14.5h20" stroke="#aaa" stroke-width=".6"/><path d="M3 17.0h20" stroke="#aaa" stroke-width=".6"/><path d="M3 19.5h20" stroke="#aaa" stroke-width=".6"/><path d="M3 22.0h20" stroke="#aaa" stroke-width=".6"/><circle cx="22" cy="22" r="5" fill="#e0302a"/><circle cx="22" cy="22" r="2.5" fill="#ddd"/></svg>
<svg class="a" style="left:932px;top:734px" width="28.0" height="27" viewBox="0 0 28.0 27"><rect x="0.5" y="9" width="27" height="15" fill="#7de36a" stroke="#ccc" stroke-width=".5"/><path d="M3 12.0h20" stroke="#aaa" stroke-width=".6"/><path d="M3 14.5h20" stroke="#aaa" stroke-width=".6"/><path d="M3 17.0h20" stroke="#aaa" stroke-width=".6"/><path d="M3 19.5h20" stroke="#aaa" stroke-width=".6"/><path d="M3 22.0h20" stroke="#aaa" stroke-width=".6"/><circle cx="22" cy="22" r="5" fill="#2c2255"/></svg>
<svg class="a" style="left:962px;top:734px" width="28.0" height="27" viewBox="0 0 28.0 27"><rect x="0.5" y="9" width="27" height="15" fill="#f7f7f7" stroke="#ccc" stroke-width=".5"/><path d="M3 12.0h20" stroke="#aaa" stroke-width=".6"/><path d="M3 14.5h20" stroke="#aaa" stroke-width=".6"/><path d="M3 17.0h20" stroke="#aaa" stroke-width=".6"/><path d="M3 19.5h20" stroke="#aaa" stroke-width=".6"/><path d="M3 22.0h20" stroke="#aaa" stroke-width=".6"/><rect x="18" y="19" width="9" height="8" fill="#7f9cc0" stroke="#4a6a90" stroke-width=".6"/></svg>
<svg class="a" style="left:993px;top:734px" width="28.0" height="27" viewBox="0 0 28.0 27"><rect x="0.5" y="3" width="27" height="24" fill="#fafafa" stroke="#ccc" stroke-width=".5"/><path d="M3 6.0h20" stroke="#aaa" stroke-width=".6"/><path d="M3 8.5h20" stroke="#aaa" stroke-width=".6"/><path d="M3 11.0h20" stroke="#aaa" stroke-width=".6"/><path d="M3 13.5h20" stroke="#aaa" stroke-width=".6"/><path d="M3 16.0h20" stroke="#aaa" stroke-width=".6"/><path d="M3 18.5h20" stroke="#aaa" stroke-width=".6"/><path d="M3 21.0h20" stroke="#aaa" stroke-width=".6"/><path d="M3 23.5h20" stroke="#aaa" stroke-width=".6"/><circle cx="22" cy="22" r="4.5" fill="#f07b18"/></svg>
<svg class="a" style="left:1023px;top:734px" width="28.0" height="27" viewBox="0 0 28.0 27"><rect x="0.5" y="9" width="27" height="15" fill="#1a2040" stroke="#ccc" stroke-width=".5"/><path d="M3 12.0h20" stroke="#aaa" stroke-width=".6"/><path d="M3 14.5h20" stroke="#aaa" stroke-width=".6"/><path d="M3 17.0h20" stroke="#aaa" stroke-width=".6"/><path d="M3 19.5h20" stroke="#aaa" stroke-width=".6"/><path d="M3 22.0h20" stroke="#aaa" stroke-width=".6"/><circle cx="22" cy="22" r="4.5" fill="#1e8ff0"/></svg>
<svg class="a" style="left:1054px;top:734px" width="28.0" height="27" viewBox="0 0 28.0 27"><rect x="0.5" y="9" width="27" height="15" fill="#8aa070" stroke="#ccc" stroke-width=".5"/><path d="M3 12.0h20" stroke="#aaa" stroke-width=".6"/><path d="M3 14.5h20" stroke="#aaa" stroke-width=".6"/><path d="M3 17.0h20" stroke="#aaa" stroke-width=".6"/><path d="M3 19.5h20" stroke="#aaa" stroke-width=".6"/><path d="M3 22.0h20" stroke="#aaa" stroke-width=".6"/><rect x="18" y="18" width="8" height="9" fill="#e03030"/></svg>
<svg class="a" style="left:1085px;top:734px" width="28.0" height="27" viewBox="0 0 28.0 27"><rect x="0.5" y="3" width="27" height="24" fill="#fafafa" stroke="#ccc" stroke-width=".5"/><path d="M3 6.0h20" stroke="#aaa" stroke-width=".6"/><path d="M3 8.5h20" stroke="#aaa" stroke-width=".6"/><path d="M3 11.0h20" stroke="#aaa" stroke-width=".6"/><path d="M3 13.5h20" stroke="#aaa" stroke-width=".6"/><path d="M3 16.0h20" stroke="#aaa" stroke-width=".6"/><path d="M3 18.5h20" stroke="#aaa" stroke-width=".6"/><path d="M3 21.0h20" stroke="#aaa" stroke-width=".6"/><path d="M3 23.5h20" stroke="#aaa" stroke-width=".6"/><rect x="18" y="19" width="9" height="8" fill="#7f9cc0" stroke="#4a6a90" stroke-width=".6"/></svg>
<svg class="a" style="left:1115px;top:734px" width="32.0" height="27" viewBox="0 0 32.0 27"><rect x="1" y="1" width="30" height="24" rx="2" fill="#1e1e1e"/><rect x="3" y="3" width="26" height="20" fill="#fff"/></svg>
<svg class="a" style="left:1148px;top:734px" width="28.0" height="27" viewBox="0 0 28.0 27"><path d="M3 5h22l-2 22H5z" fill="#dfe3e6" stroke="#b8bcc0"/><ellipse cx="14" cy="5" rx="11" ry="2.5" fill="#c9cdd0"/><path d="M8 8v17M14 8v18M20 8v17" stroke="#c6c9cc" stroke-width=".8"/><path d="M6 4l4-2l5 2l5-2l3 2" fill="#888"/></svg>
</body></html>
